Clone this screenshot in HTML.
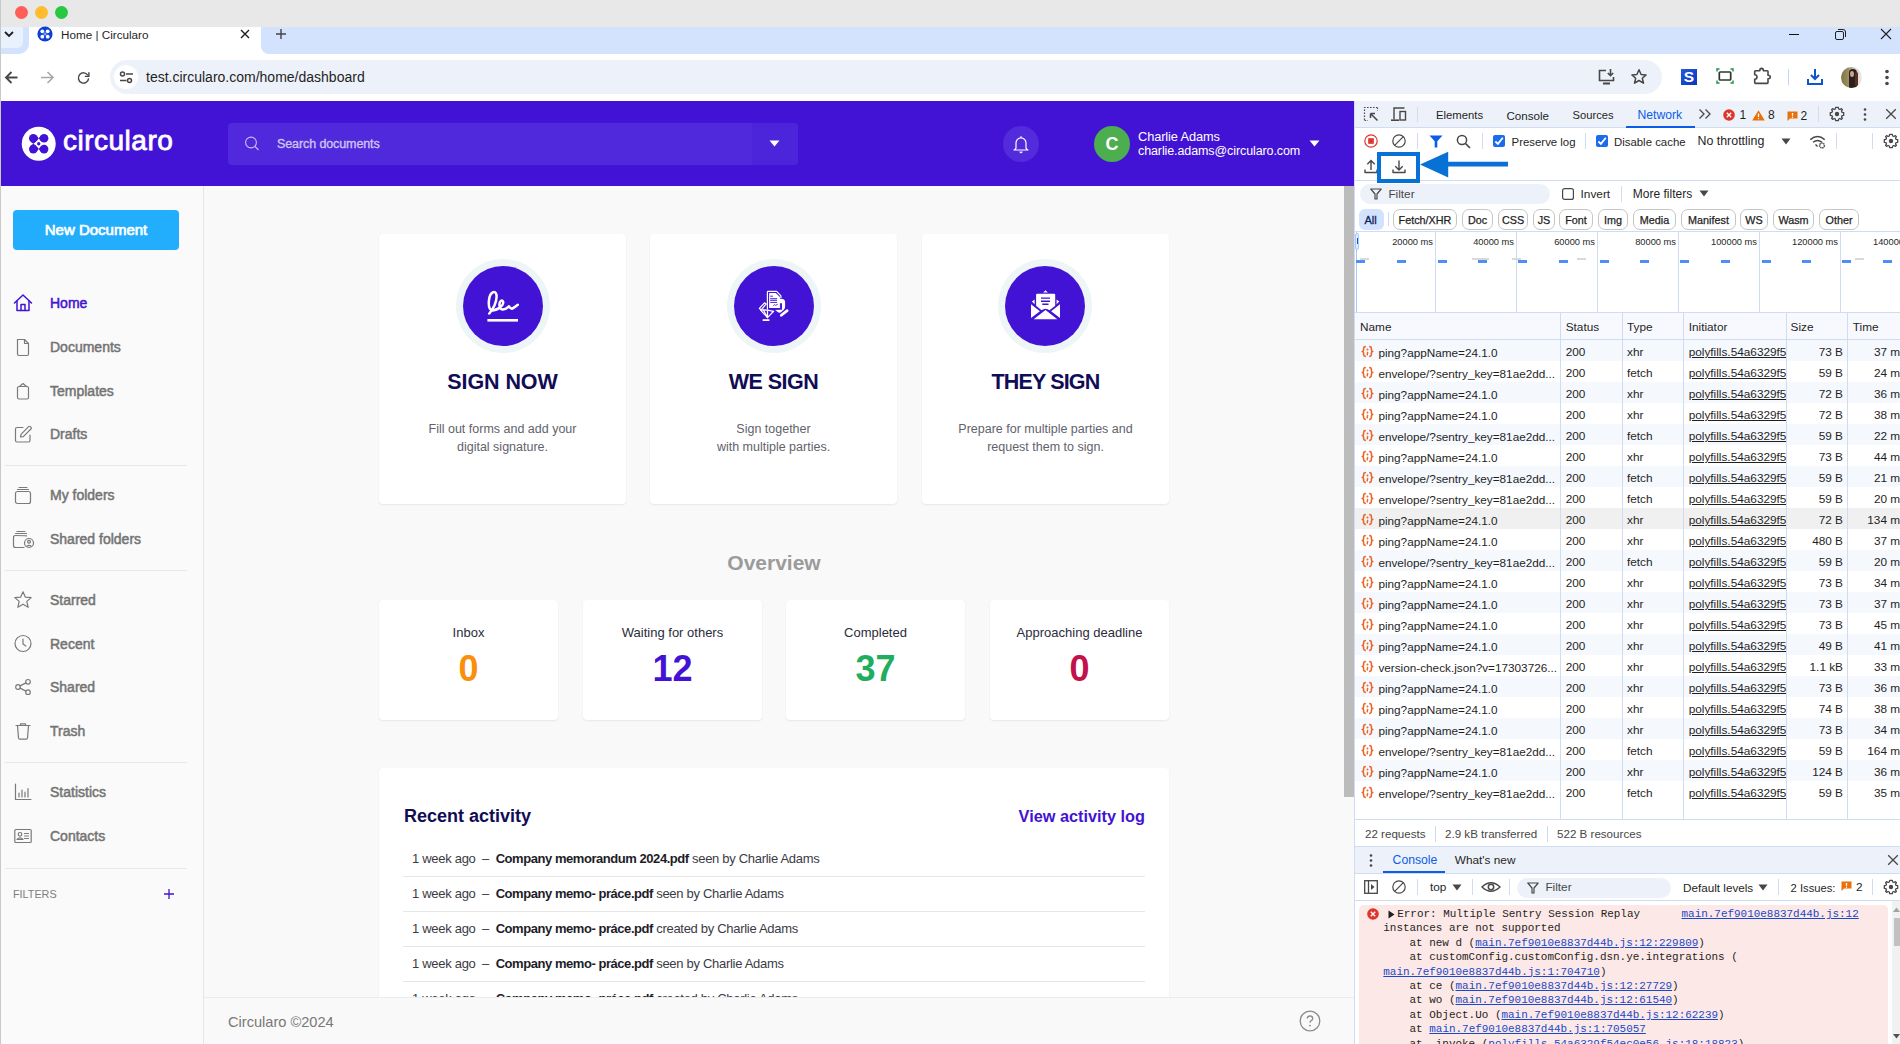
<!DOCTYPE html>
<html><head><meta charset="utf-8">
<style>
*{box-sizing:border-box;margin:0;padding:0}
html,body{width:1900px;height:1044px;overflow:hidden;background:#fff}
body{position:relative;font-family:"Liberation Sans",sans-serif;color:#000}
.a{position:absolute}
svg{display:block}
/* chrome */
#title{left:0;top:0;width:1900px;height:27px;background:#e8e8e8}
.tl{top:6px;width:13px;height:13px;border-radius:50%}
#tabs{left:0;top:27px;width:1900px;height:27px;background:#d3e3fd}
#tb{left:0;top:54px;width:1900px;height:47px;background:#fff}
#omni{left:110px;top:6px;width:1552px;height:34px;border-radius:17px;background:#edf2fa}
/* app */
#app{left:0;top:101px;width:1354px;height:943px;background:#f9f9f9;overflow:hidden}
#hdr{left:0;top:0;width:1354px;height:85px;background:#4213d4}
#side{left:0;top:85px;width:204px;height:858px;background:#fafafa;border-right:1px solid #e6e6e6}
#main{left:204px;top:85px;width:1140px;height:858px;background:#f9f9f9}
#sb{left:1344px;top:85px;width:10px;height:858px;background:transparent}
/* devtools */
#dt{left:1354px;top:101px;width:546px;height:943px;background:#fff;overflow:hidden;font-family:"Liberation Sans",sans-serif;font-size:12px;color:#1f1f1f}
#edge{left:0;top:0;width:1px;height:1044px;background:#c9c9c9;z-index:10}
</style></head><body>
<div id="title" class="a">
  <div class="a tl" style="left:15px;background:#fe5f57"></div>
  <div class="a tl" style="left:35px;background:#febc2e"></div>
  <div class="a tl" style="left:55px;background:#28c840"></div>
</div>
<div id="tabs" class="a" style="background:#fff">
  <div class="a" style="left:0;top:0;width:29px;height:27px;background:#d3e3fd;border-radius:0 0 10px 0"></div>
  <div class="a" style="left:1px;top:0;width:22px;height:21px;background:#e9f1fd;border-radius:0 0 6px 0"></div>
  <svg class="a" style="left:4px;top:4px" width="10" height="7" viewBox="0 0 10 7"><path d="M1 1 L5 5 L9 1" fill="none" stroke="#1f1f1f" stroke-width="1.8"/></svg>
  <div class="a" style="left:261px;top:0;width:1639px;height:27px;background:#d3e3fd;border-radius:0 0 0 8px"></div>
  <svg class="a" style="left:37px;top:-1px" width="16" height="16" viewBox="0 0 16 16"><circle cx="8" cy="8" r="7.6" fill="#0d3fd8"/><g fill="#fff"><circle cx="5.3" cy="5.3" r="1.9"/><circle cx="10.7" cy="5.3" r="1.9"/><circle cx="5.3" cy="10.7" r="1.9"/><circle cx="10.7" cy="10.7" r="1.9"/></g><circle cx="8" cy="8" r="1.1" fill="none" stroke="#fff" stroke-width=".6"/></svg>
  <div class="a" style="left:61px;top:1px;font-size:11.7px;line-height:14px;color:#1f1f1f;letter-spacing:0px">Home | Circularo</div>
  <svg class="a" style="left:239px;top:1px" width="12" height="12" viewBox="0 0 12 12"><path d="M2 2 L10 10 M10 2 L2 10" stroke="#1f1f1f" stroke-width="1.4"/></svg>
  <svg class="a" style="left:275px;top:1px" width="12" height="12" viewBox="0 0 12 12"><path d="M6 1 V11 M1 6 H11" stroke="#444" stroke-width="1.4"/></svg>
  <svg class="a" style="left:1787px;top:1px" width="14" height="12" viewBox="0 0 14 12"><path d="M2 6.5 H12" stroke="#111" stroke-width="1"/></svg>
  <svg class="a" style="left:1833px;top:0px" width="14" height="14" viewBox="0 0 14 14"><rect x="2.5" y="4.5" width="8" height="8" rx="1.5" fill="none" stroke="#1f1f1f" stroke-width="1"/><path d="M5 2.5 H10 Q12.5 2.5 12.5 5 V10" fill="none" stroke="#1f1f1f" stroke-width="1"/></svg>
  <svg class="a" style="left:1879px;top:0px" width="14" height="14" viewBox="0 0 14 14"><path d="M2 2 L12 12 M12 2 L2 12" stroke="#1f1f1f" stroke-width="1.1"/></svg>
</div>
<div id="tb" class="a">
  <svg class="a" style="left:3px;top:15px" width="17" height="17" viewBox="0 0 17 17"><path d="M14.5 8.5 H3 M8.5 3 L3 8.5 L8.5 14" fill="none" stroke="#474747" stroke-width="1.9"/></svg>
  <svg class="a" style="left:39px;top:15px" width="17" height="17" viewBox="0 0 17 17"><path d="M2 8.5 H14 M8.5 3 L14 8.5 L8.5 14" fill="none" stroke="#a8a8a8" stroke-width="1.6"/></svg>
  <svg class="a" style="left:76px;top:15.5px" width="15" height="15" viewBox="0 0 17 17"><path d="M13.6 6.2 A5.8 5.8 0 1 0 14.3 9.5" fill="none" stroke="#474747" stroke-width="1.6"/><path d="M14.6 2.6 V7.2 H10" fill="none" stroke="#474747" stroke-width="1.6"/></svg>
  <div id="omni" class="a">
    <div class="a" style="left:4px;top:5px;width:24px;height:24px;border-radius:12px;background:#fff"></div>
    <svg class="a" style="left:8px;top:9px" width="17" height="17" viewBox="0 0 17 17"><g fill="none" stroke="#474747" stroke-width="1.5"><circle cx="4.5" cy="5" r="2"/><path d="M8 5 H15"/><circle cx="11.5" cy="11.5" r="2"/><path d="M2 11.5 H8.5"/></g></svg>
    <div class="a" style="left:36px;top:9px;font-size:14px;line-height:17px;color:#1f1f1f">test.circularo.com/home/dashboard</div>
    <svg class="a" style="left:1487px;top:8px" width="19" height="18" viewBox="0 0 19 18"><g fill="none" stroke="#474747" stroke-width="1.6"><path d="M9 2.5 H2.5 V12.5 H16.5 V9"/><path d="M13.5 1 V7.5 M10.8 5 L13.5 7.7 L16.2 5"/></g><path d="M6 15.5 H13" stroke="#474747" stroke-width="2"/></svg>
    <svg class="a" style="left:1520px;top:8px" width="18" height="18" viewBox="0 0 18 18"><path d="M9 1.8 L11.1 6.5 L16.1 6.9 L12.3 10.2 L13.5 15.2 L9 12.5 L4.5 15.2 L5.7 10.2 L1.9 6.9 L6.9 6.5 Z" fill="none" stroke="#474747" stroke-width="1.5" stroke-linejoin="round"/></svg>
  </div>
  <div class="a" style="left:1681px;top:15px;width:16px;height:16px;background:linear-gradient(135deg,#2358e0,#0b36b8)"></div>
  <div class="a" style="left:1681px;top:12px;width:16px;height:22px;color:#fff;font-weight:bold;font-size:15.5px;line-height:22px;text-align:center">S</div>
  <svg class="a" style="left:1716px;top:14px" width="18" height="16" viewBox="0 0 18 16"><path d="M1 3.5 V1 H3.5 M14.5 1 H17 V3.5 M17 12.5 V15 H14.5 M3.5 15 H1 V12.5" fill="none" stroke="#1e8e3e" stroke-width="1.4"/><rect x="3.3" y="4" width="11.4" height="8" rx="0.8" fill="none" stroke="#333" stroke-width="1.7"/></svg>
  <svg class="a" style="left:1753px;top:13px" width="19" height="18" viewBox="0 0 19 18"><path d="M2.5 3.8 H6.8 Q6.8 1.4 8.6 1.4 Q10.4 1.4 10.4 3.8 H14.2 Q15 3.8 15 4.6 V8.3 Q17.3 8.3 17.3 10 Q17.3 11.7 15 11.7 V15.6 Q15 16.4 14.2 16.4 H2.5 Q1.7 16.4 1.7 15.6 V12.2 Q4 12.2 4 10 Q4 7.8 1.7 7.8 V4.6 Q1.7 3.8 2.5 3.8 Z" fill="none" stroke="#474747" stroke-width="1.6" stroke-linejoin="round"/></svg>
  <div class="a" style="left:1787.5px;top:15px;width:1.2px;height:16px;background:#c2d5f7"></div>
  <svg class="a" style="left:1806px;top:14px" width="18" height="18" viewBox="0 0 18 18"><g fill="none" stroke="#0b57d0" stroke-width="2"><path d="M9 1 V11 M5 7 L9 11 L13 7"/><path d="M2 11 V16 H16 V11"/></g></svg>
  <div class="a" style="left:1840.5px;top:12.5px;width:21px;height:21px;border-radius:50%;background:linear-gradient(90deg,#7d7446 0,#9c8f62 35%,#d9d4cc 70%,#ecebe8 100%);overflow:hidden"><div class="a" style="left:8px;top:2px;width:8px;height:19px;background:#2a1f1c;border-radius:4px 4px 0 0"></div><div class="a" style="left:9.5px;top:4px;width:4px;height:6px;background:#c9a58c;border-radius:50%"></div><div class="a" style="left:14px;top:5px;width:3px;height:14px;background:#5a2f24;border-radius:2px"></div></div>
  <svg class="a" style="left:1884px;top:15px" width="6" height="17" viewBox="0 0 6 17"><g fill="#474747"><circle cx="3" cy="2.5" r="1.8"/><circle cx="3" cy="8.5" r="1.8"/><circle cx="3" cy="14.5" r="1.8"/></g></svg>
</div>
<div id="app" class="a">
  <div id="hdr" class="a">
  <svg class="a" style="left:21px;top:25px" width="35" height="35" viewBox="0 0 35 35"><circle cx="17.7" cy="17.7" r="17" fill="#fff"/><g fill="#4213d4"><circle cx="12.30" cy="12.30" r="4.3"/><circle cx="23.10" cy="12.30" r="4.3"/><circle cx="12.30" cy="23.10" r="4.3"/><circle cx="23.10" cy="23.10" r="4.3"/><path d="M12.30 12.30 L15.72 14.90 L17.70 12.30 L15.72 9.70 Z"/><path d="M12.30 12.30 L9.70 15.72 L12.30 17.70 L14.90 15.72 Z"/><path d="M12.30 12.30 L17.70 12.30 L12.30 17.70 Z"/><path d="M23.10 12.30 L19.68 9.70 L17.70 12.30 L19.68 14.90 Z"/><path d="M12.30 23.10 L14.90 19.68 L12.30 17.70 L9.70 19.68 Z"/><path d="M12.30 23.10 L15.72 25.70 L17.70 23.10 L15.72 20.50 Z"/><path d="M12.30 23.10 L12.30 17.70 L17.70 23.10 Z"/><path d="M23.10 23.10 L19.68 20.50 L17.70 23.10 L19.68 25.70 Z"/><circle cx="17.7" cy="17.7" r="1.7"/></g></svg>
  <div class="a" style="left:63px;top:24px;font-size:28px;line-height:32px;color:#fff;-webkit-text-stroke:0.8px #fff;letter-spacing:0.5px">circularo</div>
  <div class="a" style="left:228px;top:22px;width:570px;height:42px;background:#5129dc;border-radius:4px;overflow:hidden">
    <div class="a" style="left:524px;top:0;width:46px;height:42px;background:#4c24da"></div>
    <svg class="a" style="left:16px;top:13px" width="17" height="17" viewBox="0 0 17 17"><circle cx="7" cy="6.5" r="5.4" fill="none" stroke="#c9bdf2" stroke-width="1.1"/><path d="M11 10.5 L14.5 14" stroke="#c9bdf2" stroke-width="1.1"/></svg>
    <div class="a" style="left:49px;top:13px;font-size:12.5px;line-height:16px;color:#cfc4f5;-webkit-text-stroke:0.35px #cfc4f5;letter-spacing:-0.1px">Search documents</div>
    <svg class="a" style="left:541px;top:17px" width="11" height="7" viewBox="0 0 11 7"><path d="M0.5 0.5 H10.5 L5.5 6.5 Z" fill="#fff"/></svg>
  </div>
  <div class="a" style="left:1003px;top:25px;width:36px;height:36px;border-radius:50%;background:#532bdc"></div>
  <svg class="a" style="left:1011px;top:33px" width="20" height="20" viewBox="0 0 20 20"><path d="M5 14 V9 A5 5.2 0 0 1 15 9 V14 Q15.5 15.5 17 16 H3 Q4.5 15.5 5 14 Z" fill="none" stroke="#fff" stroke-width="1.2" stroke-linejoin="round"/><path d="M10 2.3 V3.8 M8.6 17.6 L10 18.8 L11.4 17.6" fill="none" stroke="#fff" stroke-width="1.2"/></svg>
  <div class="a" style="left:1094px;top:25px;width:36px;height:36px;border-radius:50%;background:#4cae4f"></div>
  <div class="a" style="left:1094px;top:25px;width:36px;height:36px;line-height:36px;text-align:center;color:#fff;font-weight:bold;font-size:18px">C</div>
  <div class="a" style="left:1138px;top:28px;font-size:12.8px;line-height:15px;color:#fff;letter-spacing:-0.1px">Charlie Adams</div>
  <div class="a" style="left:1138px;top:43px;font-size:12.5px;line-height:15px;color:#fff;letter-spacing:-0.1px">charlie.adams@circularo.com</div>
  <svg class="a" style="left:1309px;top:39px" width="11" height="7" viewBox="0 0 11 7"><path d="M0.5 0.5 H10.5 L5.5 6.5 Z" fill="#fff"/></svg>
</div>
  <div id="side" class="a">
<div class="a" style="left:13px;top:24px;width:166px;height:40px;background:#23adfd;border-radius:4px;color:#fff;-webkit-text-stroke:0.7px #fff;font-size:15px;line-height:40px;text-align:center">New Document</div>
<div class="a" style="left:50px;top:108px;font-size:14px;line-height:18px;color:#4213d4;-webkit-text-stroke:0.5px #4213d4;white-space:nowrap">Home</div><svg class="a" style="left:13px;top:107px" width="20" height="20" viewBox="0 0 20 20" fill="none" stroke="#4213d4" stroke-width="1.5" stroke-linejoin="round" stroke-linecap="round"><path d="M1.5 10 L10 2 L18.5 10"/><path d="M4 8 V17.5 H16 V8"/><path d="M8 17.5 V11.5 H12 V17.5"/></svg>
<div class="a" style="left:50px;top:152px;font-size:14px;line-height:18px;color:#747474;-webkit-text-stroke:0.5px #747474;white-space:nowrap">Documents</div><svg class="a" style="left:15px;top:151px" width="16" height="20" viewBox="0 0 16 20" fill="none" stroke="#7a7a7a" stroke-width="1.2" stroke-linejoin="round" stroke-linecap="round"><path d="M2.5 2.5 H9.5 L13.5 6.5 V17 Q13.5 18.5 12 18.5 H4 Q2.5 18.5 2.5 17 Z"/><path d="M9.5 2.5 V6.5 H13.5"/></svg>
<div class="a" style="left:50px;top:196px;font-size:14px;line-height:18px;color:#747474;-webkit-text-stroke:0.5px #747474;white-space:nowrap">Templates</div><svg class="a" style="left:15px;top:195px" width="16" height="20" viewBox="0 0 16 20" fill="none" stroke="#7a7a7a" stroke-width="1.2" stroke-linejoin="round" stroke-linecap="round"><path d="M4 5.5 H12 Q13.5 5.5 13.5 7 V16.5 Q13.5 18 12 18 H4 Q2.5 18 2.5 16.5 V7 Q2.5 5.5 4 5.5 Z"/><path d="M4.5 5.5 L8 2.5 L11.5 5.5"/></svg>
<div class="a" style="left:50px;top:239px;font-size:14px;line-height:18px;color:#747474;-webkit-text-stroke:0.5px #747474;white-space:nowrap">Drafts</div><svg class="a" style="left:13px;top:238px" width="20" height="20" viewBox="0 0 20 20" fill="none" stroke="#7a7a7a" stroke-width="1.2" stroke-linejoin="round" stroke-linecap="round"><path d="M10 3.5 H4 Q2.5 3.5 2.5 5 V16.5 Q2.5 18 4 18 H15.5 Q17 18 17 16.5 V11"/><path d="M7.5 13 L8 10.3 L15.6 2.7 Q16.5 1.8 17.4 2.7 L17.9 3.2 Q18.8 4.1 17.9 5 L10.3 12.6 Z"/></svg>
<div class="a" style="left:5px;top:279px;width:182px;height:1px;background:#e8e8e8"></div>
<div class="a" style="left:50px;top:300px;font-size:14px;line-height:18px;color:#747474;-webkit-text-stroke:0.5px #747474;white-space:nowrap">My folders</div><svg class="a" style="left:13px;top:297px" width="20" height="22" viewBox="0 0 20 22" fill="none" stroke="#7a7a7a" stroke-width="1.2" stroke-linejoin="round" stroke-linecap="round"><path d="M6 4.5 H14"/><path d="M4.5 6.5 H15.5"/><rect x="2.5" y="8.5" width="15" height="12" rx="2"/></svg>
<div class="a" style="left:50px;top:344px;font-size:14px;line-height:18px;color:#747474;-webkit-text-stroke:0.5px #747474;white-space:nowrap">Shared folders</div><svg class="a" style="left:11px;top:341px" width="24" height="22" viewBox="0 0 24 22" fill="none" stroke="#7a7a7a" stroke-width="1.2" stroke-linejoin="round" stroke-linecap="round"><path d="M6 4.5 H14"/><path d="M4.5 6.5 H15.5"/><path d="M15.5 8.8 Q13.5 8.5 4.5 8.5 Q2.5 8.5 2.5 10.5 V18.5 Q2.5 20.5 4.5 20.5 H13"/><circle cx="18" cy="16" r="4.5"/><circle cx="18" cy="14.8" r="1.4"/><path d="M15.8 19.3 Q18 17.3 20.2 19.3"/></svg>
<div class="a" style="left:5px;top:384px;width:182px;height:1px;background:#e8e8e8"></div>
<div class="a" style="left:50px;top:405px;font-size:14px;line-height:18px;color:#747474;-webkit-text-stroke:0.5px #747474;white-space:nowrap">Starred</div><svg class="a" style="left:13px;top:404px" width="20" height="20" viewBox="0 0 20 20" fill="none" stroke="#7a7a7a" stroke-width="1.2" stroke-linejoin="round" stroke-linecap="round"><path d="M10 1.8 L12.4 7.2 L18.2 7.6 L13.8 11.4 L15.2 17.3 L10 14.2 L4.8 17.3 L6.2 11.4 L1.8 7.6 L7.6 7.2 Z"/></svg>
<div class="a" style="left:50px;top:449px;font-size:14px;line-height:18px;color:#747474;-webkit-text-stroke:0.5px #747474;white-space:nowrap">Recent</div><svg class="a" style="left:13px;top:448px" width="20" height="20" viewBox="0 0 20 20" fill="none" stroke="#7a7a7a" stroke-width="1.2" stroke-linejoin="round" stroke-linecap="round"><circle cx="10" cy="9.5" r="8"/><path d="M10 5 V10 L12.8 12"/></svg>
<div class="a" style="left:50px;top:492px;font-size:14px;line-height:18px;color:#747474;-webkit-text-stroke:0.5px #747474;white-space:nowrap">Shared</div><svg class="a" style="left:13px;top:491px" width="20" height="20" viewBox="0 0 20 20" fill="none" stroke="#7a7a7a" stroke-width="1.2" stroke-linejoin="round" stroke-linecap="round"><circle cx="5" cy="10" r="2.3"/><circle cx="15" cy="4.8" r="2.3"/><circle cx="15" cy="15.2" r="2.3"/><path d="M7.1 8.9 L12.9 5.9 M7.1 11.1 L12.9 14.1"/></svg>
<div class="a" style="left:50px;top:536px;font-size:14px;line-height:18px;color:#747474;-webkit-text-stroke:0.5px #747474;white-space:nowrap">Trash</div><svg class="a" style="left:13px;top:535px" width="20" height="20" viewBox="0 0 20 20" fill="none" stroke="#7a7a7a" stroke-width="1.2" stroke-linejoin="round" stroke-linecap="round"><path d="M3 4.5 H17"/><path d="M7.5 4.5 V2.8 H12.5 V4.5"/><path d="M4.5 4.5 L5.5 17 Q5.6 18.2 6.8 18.2 H13.2 Q14.4 18.2 14.5 17 L15.5 4.5"/></svg>
<div class="a" style="left:5px;top:576px;width:182px;height:1px;background:#e8e8e8"></div>
<div class="a" style="left:50px;top:597px;font-size:14px;line-height:18px;color:#747474;-webkit-text-stroke:0.5px #747474;white-space:nowrap">Statistics</div><svg class="a" style="left:13px;top:596px" width="20" height="20" viewBox="0 0 20 20" fill="none" stroke="#7a7a7a" stroke-width="1.2" stroke-linejoin="round" stroke-linecap="round"><path d="M2.5 2 V17.5 H18"/><path d="M6 15 V11 M9 15 V8 M12 15 V10 M15 15 V6.5"/></svg>
<div class="a" style="left:50px;top:641px;font-size:14px;line-height:18px;color:#747474;-webkit-text-stroke:0.5px #747474;white-space:nowrap">Contacts</div><svg class="a" style="left:13px;top:640px" width="20" height="20" viewBox="0 0 20 20" fill="none" stroke="#7a7a7a" stroke-width="1.2" stroke-linejoin="round" stroke-linecap="round"><rect x="1.8" y="3.5" width="16.4" height="13" rx="1"/><circle cx="7" cy="8.3" r="1.8"/><path d="M4 13.5 Q7 10.3 10 13.5 Z"/><path d="M11.5 7.5 H15.5 M11.5 10 H15.5 M11.5 12.5 H15.5"/></svg>
<div class="a" style="left:5px;top:682px;width:182px;height:1px;background:#e8e8e8"></div>
<div class="a" style="left:13px;top:701px;font-size:10.8px;line-height:14px;color:#7d7d7d">FILTERS</div>
<svg class="a" style="left:163px;top:702px" width="12" height="12" viewBox="0 0 12 12"><path d="M6 1 V11 M1 6 H11" stroke="#4213d4" stroke-width="1.3"/></svg>
</div>
<div id="main" class="a">
<div class="a" style="left:175px;top:48px;width:247px;height:270px;background:#fff;border-radius:4px;box-shadow:0 1px 2px rgba(0,0,0,0.07),0 0 1px rgba(0,0,0,0.04)"></div>
<div class="a" style="left:251.5px;top:73px;width:94px;height:94px;border-radius:50%;background:#eef5f7"></div>
<div class="a" style="left:258.5px;top:80px;width:80px;height:80px;border-radius:50%;background:#4213d4"></div>
<svg class="a" style="left:270px;top:92px" width="58" height="56" viewBox="0 0 58 56"><path d="M15.3 35.5 C19 31.5 23.5 23 22.4 16.5 C21.5 12 16 13.5 15 22 C14 30.5 16.5 33 20 32.3 C23 31.6 26.5 29.5 28.3 27 C30 24.5 29 21.5 27 22.8 C24.5 24.5 25 31 28.5 31.5 C31.5 31.8 33.5 29.5 35 28.3 C36 30 37 31 38.3 30.5 C40 29.8 42 28 43.8 26.7" fill="none" stroke="#fff" stroke-width="2.5" stroke-linecap="round" stroke-linejoin="round"/><rect x="13.4" y="41" width="30.6" height="2.6" fill="#fff"/></svg>
<div class="a" style="left:175px;top:183px;width:247px;text-align:center;font-size:21.5px;line-height:26px;font-weight:bold;color:#100c55;letter-spacing:-0.1px">SIGN NOW</div>
<div class="a" style="left:175px;top:234px;width:247px;text-align:center;font-size:12.5px;line-height:18px;color:#62626c">Fill out forms and add your<br>digital signature.</div>
<div class="a" style="left:446px;top:48px;width:247px;height:270px;background:#fff;border-radius:4px;box-shadow:0 1px 2px rgba(0,0,0,0.07),0 0 1px rgba(0,0,0,0.04)"></div>
<div class="a" style="left:522.5px;top:73px;width:94px;height:94px;border-radius:50%;background:#eef5f7"></div>
<div class="a" style="left:529.5px;top:80px;width:80px;height:80px;border-radius:50%;background:#4213d4"></div>
<svg class="a" style="left:541px;top:92px" width="58" height="56" viewBox="0 0 58 56"><path d="M22.4 31.4 V14 Q22.4 13.4 23 13.4 H31.7 L35.9 17.8 V20.6" fill="none" stroke="#fff" stroke-width="1.2" stroke-linejoin="round"/><path d="M24.1 15 H30.8 L34.9 19 V30 H24.1 Z" fill="#fff"/><g stroke="#4213d4" stroke-width="0.95"><path d="M25.2 18.2 H27.9 M25.2 20.7 H32.2 M25.2 22.3 H32.2 M25.2 24.4 H32.7"/></g><path d="M28.2 27.8 L29.6 26.6 L30.6 27.4 L32.7 26.3" fill="none" stroke="#4213d4" stroke-width="0.9"/><path d="M32.2 20.9 H37.4 Q40.1 21.3 40.1 24 V28.8 Q40.1 30.6 38.6 31.9 L35.6 34.4 Q34.3 35.2 33 34.3 L30.2 32 L35.1 31.7 V25.2 H32.2 Z" fill="#fff"/><path d="M35.1 25.2 H37 V31.7 H35.1 Z" fill="#4213d4"/><path d="M36.3 37.3 L42.2 32.6" stroke="#fff" stroke-width="2.7" stroke-linecap="round"/><g fill="none" stroke="#fff" stroke-width="1.25" stroke-linejoin="round"><path d="M14.4 30.4 L19.5 24.8 L21.2 25.9 L16.3 31.9 Z"/><path d="M15.8 32.4 L22.5 39.6 L28.6 33.3 L22.5 32.2 L18.3 31.8 Z"/><path d="M18.3 31.8 L22.5 39.6 L22.5 32.2"/></g><rect x="17.7" y="41.2" width="6.7" height="1.8" fill="#fff"/></svg>
<div class="a" style="left:446px;top:183px;width:247px;text-align:center;font-size:21.5px;line-height:26px;font-weight:bold;color:#100c55;letter-spacing:-0.55px">WE SIGN</div>
<div class="a" style="left:446px;top:234px;width:247px;text-align:center;font-size:12.5px;line-height:18px;color:#62626c">Sign together<br>with multiple parties.</div>
<div class="a" style="left:718px;top:48px;width:247px;height:270px;background:#fff;border-radius:4px;box-shadow:0 1px 2px rgba(0,0,0,0.07),0 0 1px rgba(0,0,0,0.04)"></div>
<div class="a" style="left:794px;top:73px;width:94px;height:94px;border-radius:50%;background:#eef5f7"></div>
<div class="a" style="left:801px;top:80px;width:80px;height:80px;border-radius:50%;background:#4213d4"></div>
<svg class="a" style="left:812px;top:92px" width="58" height="56" viewBox="0 0 58 56"><path d="M20.1 16.8 Q20.1 15.8 21.1 15.8 H38.2 Q39.2 15.8 39.2 16.8 V27.8 L33.5 32.3 Q29.5 29.3 25.5 32.3 L20.1 27.8 Z" fill="#fff"/><path d="M27.2 14.5 L29.5 12.3 L31.8 14.5 Z" fill="#fff"/><path d="M15.9 23.5 L18.6 21.5 V26.3 Z M43.2 23.5 L40.6 21.5 V26.3 Z" fill="#fff"/><path d="M15 26.2 L23.9 33.3 L15 40 Z M44 26.2 L35.1 33.3 L44 40 Z" fill="#fff"/><path d="M17.7 41.3 L29.5 31.9 L41.3 41.3 Z" fill="#fff"/><g stroke="#4213d4" stroke-width="1.4"><path d="M25 20.1 H34 M25 23.2 H34 M26.3 26.3 H32.5"/></g></svg>
<div class="a" style="left:718px;top:183px;width:247px;text-align:center;font-size:21.5px;line-height:26px;font-weight:bold;color:#100c55;letter-spacing:-0.85px">THEY SIGN</div>
<div class="a" style="left:718px;top:234px;width:247px;text-align:center;font-size:12.5px;line-height:18px;color:#62626c">Prepare for multiple parties and<br>request them to sign.</div>
<div class="a" style="left:175px;top:364px;width:790px;text-align:center;font-size:21px;line-height:26px;font-weight:bold;color:#9b9b9b">Overview</div>
<div class="a" style="left:175px;top:414px;width:179px;height:120px;background:#fff;border-radius:4px;box-shadow:0 1px 2px rgba(0,0,0,0.07),0 0 1px rgba(0,0,0,0.04)"></div>
<div class="a" style="left:175px;top:438.5px;width:179px;text-align:center;font-size:13px;line-height:16px;color:#2c2c3a">Inbox</div>
<div class="a" style="left:175px;top:463px;width:179px;text-align:center;font-size:36px;line-height:40px;font-weight:bold;color:#fa8f0c">0</div>
<div class="a" style="left:379px;top:414px;width:179px;height:120px;background:#fff;border-radius:4px;box-shadow:0 1px 2px rgba(0,0,0,0.07),0 0 1px rgba(0,0,0,0.04)"></div>
<div class="a" style="left:379px;top:438.5px;width:179px;text-align:center;font-size:13px;line-height:16px;color:#2c2c3a">Waiting for others</div>
<div class="a" style="left:379px;top:463px;width:179px;text-align:center;font-size:36px;line-height:40px;font-weight:bold;color:#4213d4">12</div>
<div class="a" style="left:582px;top:414px;width:179px;height:120px;background:#fff;border-radius:4px;box-shadow:0 1px 2px rgba(0,0,0,0.07),0 0 1px rgba(0,0,0,0.04)"></div>
<div class="a" style="left:582px;top:438.5px;width:179px;text-align:center;font-size:13px;line-height:16px;color:#2c2c3a">Completed</div>
<div class="a" style="left:582px;top:463px;width:179px;text-align:center;font-size:36px;line-height:40px;font-weight:bold;color:#1fad5e">37</div>
<div class="a" style="left:786px;top:414px;width:179px;height:120px;background:#fff;border-radius:4px;box-shadow:0 1px 2px rgba(0,0,0,0.07),0 0 1px rgba(0,0,0,0.04)"></div>
<div class="a" style="left:786px;top:438.5px;width:179px;text-align:center;font-size:13px;line-height:16px;color:#2c2c3a">Approaching deadline</div>
<div class="a" style="left:786px;top:463px;width:179px;text-align:center;font-size:36px;line-height:40px;font-weight:bold;color:#c4104b">0</div>
<div class="a" style="left:175px;top:582px;width:790px;height:300px;background:#fff;border-radius:4px;box-shadow:0 1px 2px rgba(0,0,0,0.07),0 0 1px rgba(0,0,0,0.04)"></div>
<div class="a" style="left:200px;top:619px;font-size:18px;line-height:22px;font-weight:bold;color:#100c55">Recent activity</div>
<div class="a" style="left:696px;top:619px;width:245px;text-align:right;font-size:16.3px;line-height:22px;font-weight:bold;color:#4213d4">View activity log</div>
<div class="a" style="left:208px;top:664px;white-space:nowrap;font-size:13px;line-height:18px;color:#3b3b45;letter-spacing:-0.3px">1 week ago&nbsp; –&nbsp; <b style="color:#1d1d28;letter-spacing:-0.45px">Company memorandum 2024.pdf</b> seen by Charlie Adams</div>
<div class="a" style="left:199px;top:690px;width:742px;height:1px;background:#e6e6e6"></div>
<div class="a" style="left:208px;top:699px;white-space:nowrap;font-size:13px;line-height:18px;color:#3b3b45;letter-spacing:-0.3px">1 week ago&nbsp; –&nbsp; <b style="color:#1d1d28;letter-spacing:-0.45px">Company memo- práce.pdf</b> seen by Charlie Adams</div>
<div class="a" style="left:199px;top:725px;width:742px;height:1px;background:#e6e6e6"></div>
<div class="a" style="left:208px;top:734px;white-space:nowrap;font-size:13px;line-height:18px;color:#3b3b45;letter-spacing:-0.3px">1 week ago&nbsp; –&nbsp; <b style="color:#1d1d28;letter-spacing:-0.45px">Company memo- práce.pdf</b> created by Charlie Adams</div>
<div class="a" style="left:199px;top:760px;width:742px;height:1px;background:#e6e6e6"></div>
<div class="a" style="left:208px;top:769px;white-space:nowrap;font-size:13px;line-height:18px;color:#3b3b45;letter-spacing:-0.3px">1 week ago&nbsp; –&nbsp; <b style="color:#1d1d28;letter-spacing:-0.45px">Company memo- práce.pdf</b> seen by Charlie Adams</div>
<div class="a" style="left:199px;top:795px;width:742px;height:1px;background:#e6e6e6"></div>
<div class="a" style="left:208px;top:804px;white-space:nowrap;font-size:13px;line-height:18px;color:#3b3b45;letter-spacing:-0.3px">1 week ago&nbsp; –&nbsp; <b style="color:#1d1d28;letter-spacing:-0.45px">Company memo- práce.pdf</b> created by Charlie Adams</div>
<div class="a" style="left:0px;top:811px;width:1150px;height:47px;background:#f9f9f9;border-top:1px solid #ececec"></div>
<div class="a" style="left:24px;top:827px;font-size:14.6px;line-height:18px;color:#787878">Circularo ©2024</div>
<svg class="a" style="left:1095px;top:824px" width="22" height="22" viewBox="0 0 22 22"><circle cx="11" cy="11" r="9.8" fill="none" stroke="#8a8a8a" stroke-width="1.3"/><path d="M8.3 8.6 Q8.3 6 11 6 Q13.7 6 13.7 8.5 Q13.7 10 11.9 10.9 Q11 11.4 11 12.8" fill="none" stroke="#8a8a8a" stroke-width="1.3"/><circle cx="11" cy="15.6" r="0.9" fill="#8a8a8a"/></svg>
</div>
<div id="sb" class="a"><div class="a" style="left:0;top:0;width:10px;height:611px;background:#bcbcbc"></div></div>
</div>
<div id="dt" class="a">
<div class="a" style="left:0.0px;top:0.0px;width:1px;height:943px;background:#d0dcf2"></div>
<div class="a" style="left:1.0px;top:0.0px;width:545px;height:26px;background:#edf2fa"></div>
<div class="a" style="left:1.0px;top:26.0px;width:545px;height:1px;background:#d0dcf2"></div>
<svg class="a" style="left:9.0px;top:5.0px" width="16" height="16" viewBox="0 0 16 16" ><g fill="none" stroke="#474747" stroke-width="1.2" stroke-dasharray="1.6 1.4"><path d="M1.5 14 V1.5 H14"/></g><path d="M1.5 14.5 H5 M14.5 1.5 V5" stroke="#474747" stroke-width="1.2" stroke-dasharray="1.6 1.4"/><path d="M7.5 7.5 L14.5 14.5 M7.5 7.5 H12 M7.5 7.5 V12" fill="none" stroke="#474747" stroke-width="1.5"/></svg>
<svg class="a" style="left:36.0px;top:5.0px" width="18" height="16" viewBox="0 0 18 16" ><path d="M4 13.5 V2 H14.5" fill="none" stroke="#474747" stroke-width="1.4"/><path d="M1 14.2 H9" stroke="#474747" stroke-width="1.6"/><rect x="10" y="5.5" width="5.5" height="8.5" fill="none" stroke="#474747" stroke-width="1.4"/></svg>
<div class="a" style="left:63.0px;top:6.0px;width:1px;height:15px;background:#d0dcf2"></div>
<div class="a" style="left:82.0px;top:7.1px;font-size:11.3px;line-height:14px;color:#1f1f1f;white-space:nowrap;">Elements</div>
<div class="a" style="left:152.5px;top:6.5px;font-size:11.6px;line-height:15px;color:#1f1f1f;white-space:nowrap;">Console</div>
<div class="a" style="left:218.6px;top:7.1px;font-size:11.2px;line-height:14px;color:#1f1f1f;white-space:nowrap;">Sources</div>
<div class="a" style="left:283.5px;top:7.3px;font-size:12.2px;line-height:15px;color:#0b5ce8;white-space:nowrap;">Network</div>
<div class="a" style="left:272.0px;top:25.0px;width:69px;height:2px;background:#0b5ce8"></div>
<svg class="a" style="left:344.0px;top:7.0px" width="14" height="12" viewBox="0 0 14 12" ><path d="M1.5 1.5 L6 6 L1.5 10.5 M7.5 1.5 L12 6 L7.5 10.5" fill="none" stroke="#474747" stroke-width="1.3"/></svg>
<svg class="a" style="left:369.0px;top:8.0px" width="12" height="12" viewBox="0 0 12 12" ><circle cx="6" cy="6" r="5.8" fill="#dc362e"/><path d="M3.8 3.8 L8.2 8.2 M8.2 3.8 L3.8 8.2" stroke="#fff" stroke-width="1.3"/></svg>
<div class="a" style="left:385.5px;top:7.3px;font-size:12px;line-height:15px;color:#1f1f1f;white-space:nowrap;">1</div>
<svg class="a" style="left:397.5px;top:9.0px" width="13" height="11" viewBox="0 0 13 11" ><path d="M6.5 0.3 L12.8 10.5 H0.2 Z" fill="#e8710a"/><path d="M6.5 3.5 V7" stroke="#fff" stroke-width="1.3"/><circle cx="6.5" cy="8.6" r="0.7" fill="#fff"/></svg>
<div class="a" style="left:414.0px;top:7.3px;font-size:12px;line-height:15px;color:#1f1f1f;white-space:nowrap;">8</div>
<svg class="a" style="left:432.5px;top:10.0px" width="11" height="11" viewBox="0 0 11 11" ><path d="M0.5 0.5 H10.5 V7.5 H3 L0.5 10 Z" fill="#e8710a"/><path d="M5.5 2 V4.8" stroke="#fff" stroke-width="1.3"/><circle cx="5.5" cy="6.2" r="0.7" fill="#fff"/></svg>
<div class="a" style="left:446.5px;top:8.3px;font-size:12px;line-height:15px;color:#1f1f1f;white-space:nowrap;">2</div>
<div class="a" style="left:464.0px;top:5.0px;width:1px;height:16px;background:#d0dcf2"></div>
<svg class="a" style="left:475.0px;top:5.0px" width="16" height="16" viewBox="0 0 16 16" ><path d="M8 1.3 L9.3 1.3 L9.7 3 L10.9 3.5 L12.4 2.6 L13.4 3.6 L12.5 5.1 L13 6.3 L14.7 6.7 L14.7 8 L14.7 9.3 L13 9.7 L12.5 10.9 L13.4 12.4 L12.4 13.4 L10.9 12.5 L9.7 13 L9.3 14.7 L6.7 14.7 L6.3 13 L5.1 12.5 L3.6 13.4 L2.6 12.4 L3.5 10.9 L3 9.7 L1.3 9.3 L1.3 6.7 L3 6.3 L3.5 5.1 L2.6 3.6 L3.6 2.6 L5.1 3.5 L6.3 3 L6.7 1.3 Z" fill="none" stroke="#474747" stroke-width="1.3" stroke-linejoin="round"/><circle cx="8" cy="8" r="2.2" fill="#474747"/></svg>
<svg class="a" style="left:508.0px;top:6.0px" width="6" height="15" viewBox="0 0 6 15" ><g fill="#474747"><circle cx="3" cy="2.5" r="1.3"/><circle cx="3" cy="7.5" r="1.3"/><circle cx="3" cy="12.5" r="1.3"/></g></svg>
<svg class="a" style="left:531.0px;top:7.0px" width="12" height="12" viewBox="0 0 12 12" ><path d="M1.2 1.2 L10.8 10.8 M10.8 1.2 L1.2 10.8" stroke="#474747" stroke-width="1.3"/></svg>
<svg class="a" style="left:10.0px;top:33.0px" width="14" height="14" viewBox="0 0 14 14" ><circle cx="7" cy="7" r="6.2" fill="none" stroke="#dc362e" stroke-width="1.2"/><rect x="4.2" y="4.2" width="5.6" height="5.6" fill="#dc362e"/></svg>
<svg class="a" style="left:38.0px;top:33.0px" width="14" height="14" viewBox="0 0 14 14" ><circle cx="7" cy="7" r="6.2" fill="none" stroke="#474747" stroke-width="1.2"/><path d="M2.7 11.3 L11.3 2.7" stroke="#474747" stroke-width="1.2"/></svg>
<div class="a" style="left:63.0px;top:32.0px;width:1px;height:16px;background:#d0dcf2"></div>
<svg class="a" style="left:75.0px;top:34.0px" width="14" height="13" viewBox="0 0 14 13" ><path d="M0.5 0.5 H13.5 L8.3 6.3 V12.5 H5.7 V6.3 Z" fill="#0b5ce8"/></svg>
<svg class="a" style="left:102.0px;top:33.0px" width="15" height="15" viewBox="0 0 15 15" ><circle cx="6" cy="6" r="4.6" fill="none" stroke="#474747" stroke-width="1.5"/><path d="M9.4 9.4 L14 14" stroke="#474747" stroke-width="1.6"/></svg>
<div class="a" style="left:128.0px;top:32.0px;width:1px;height:16px;background:#d0dcf2"></div>
<svg class="a" style="left:139.0px;top:34.0px" width="12" height="12" viewBox="0 0 12 12" ><rect x="0" y="0" width="12" height="12" rx="2" fill="#1b6bf0"/><path d="M2.4 6.5 L4.9 8.9 L9.8 2.8" fill="none" stroke="#fff" stroke-width="1.8"/></svg>
<div class="a" style="left:157.6px;top:34.0px;font-size:11.4px;line-height:14px;color:#1f1f1f;white-space:nowrap;">Preserve log</div>
<div class="a" style="left:231.0px;top:32.0px;width:1px;height:16px;background:#d0dcf2"></div>
<svg class="a" style="left:242.0px;top:34.0px" width="12" height="12" viewBox="0 0 12 12" ><rect x="0" y="0" width="12" height="12" rx="2" fill="#1b6bf0"/><path d="M2.4 6.5 L4.9 8.9 L9.8 2.8" fill="none" stroke="#fff" stroke-width="1.8"/></svg>
<div class="a" style="left:260.0px;top:34.0px;font-size:11.4px;line-height:14px;color:#1f1f1f;white-space:nowrap;">Disable cache</div>
<div class="a" style="left:343.5px;top:33.2px;font-size:12.4px;line-height:15px;color:#1f1f1f;white-space:nowrap;">No throttling</div>
<svg class="a" style="left:427.0px;top:37.0px" width="10" height="7" viewBox="0 0 10 7" ><path d="M0.5 0.5 H9.5 L5 6.5 Z" fill="#474747"/></svg>
<svg class="a" style="left:455.0px;top:33.0px" width="18" height="15" viewBox="0 0 18 15" ><path d="M1.3 5.6 Q8.5 -0.6 15.7 5.6" fill="none" stroke="#474747" stroke-width="1.4"/><path d="M4 8.3 Q8.5 4.8 13 8.3" fill="none" stroke="#474747" stroke-width="1.4"/><circle cx="13" cy="11.5" r="2.4" fill="none" stroke="#474747" stroke-width="1.5" stroke-dasharray="1.3 0.6"/><path d="M6.5 10.5 L8.5 12.5" stroke="#474747" stroke-width="1.4"/></svg>
<div class="a" style="left:482.0px;top:32.0px;width:1px;height:16px;background:#d0dcf2"></div>
<div class="a" style="left:518.0px;top:32.0px;width:1px;height:16px;background:#d0dcf2"></div>
<svg class="a" style="left:528.5px;top:32.0px" width="16" height="16" viewBox="0 0 16 16" ><path d="M8 1.3 L9.3 1.3 L9.7 3 L10.9 3.5 L12.4 2.6 L13.4 3.6 L12.5 5.1 L13 6.3 L14.7 6.7 L14.7 8 L14.7 9.3 L13 9.7 L12.5 10.9 L13.4 12.4 L12.4 13.4 L10.9 12.5 L9.7 13 L9.3 14.7 L6.7 14.7 L6.3 13 L5.1 12.5 L3.6 13.4 L2.6 12.4 L3.5 10.9 L3 9.7 L1.3 9.3 L1.3 6.7 L3 6.3 L3.5 5.1 L2.6 3.6 L3.6 2.6 L5.1 3.5 L6.3 3 L6.7 1.3 Z" fill="none" stroke="#474747" stroke-width="1.3" stroke-linejoin="round"/><circle cx="8" cy="8" r="2.2" fill="#474747"/></svg>
<svg class="a" style="left:10.0px;top:58.0px" width="14" height="15" viewBox="0 0 14 15" ><path d="M7 11 V1.8 M3.3 5.3 L7 1.6 L10.7 5.3" fill="none" stroke="#474747" stroke-width="1.4"/><path d="M1 10.5 V13.5 H13 V10.5" fill="none" stroke="#474747" stroke-width="1.4" stroke-linejoin="round"/></svg>
<svg class="a" style="left:38.0px;top:58.0px" width="14" height="15" viewBox="0 0 14 15" ><path d="M7 1.5 V10.7 M3.3 7.2 L7 10.9 L10.7 7.2" fill="none" stroke="#474747" stroke-width="1.4"/><path d="M1 10.5 V13.5 H13 V10.5" fill="none" stroke="#474747" stroke-width="1.4" stroke-linejoin="round"/></svg>
<div class="a" style="left:1.0px;top:79.0px;width:545px;height:1px;background:#d0dcf2"></div>
<div class="a" style="left:23.0px;top:51.0px;width:43px;height:31px;border:4.5px solid #0771d6"></div>
<svg class="a" style="left:65.0px;top:49.0px" width="90" height="29" viewBox="0 0 90 29" ><path d="M1 14.6 L29.2 1.8 V11.8 H89 V16.6 H29.2 V27.6 Z" fill="#0771d6"/></svg>
<div class="a" style="left:6.0px;top:83.0px;width:190px;height:20px;background:#edf2fa;border-radius:10px"></div>
<svg class="a" style="left:16.0px;top:87.0px" width="12" height="12" viewBox="0 0 12 12" ><path d="M0.8 1 H11.2 L7 6 V11 H5 V6 Z" fill="none" stroke="#474747" stroke-width="1.2" stroke-linejoin="round"/></svg>
<div class="a" style="left:34.4px;top:85.9px;font-size:11.8px;line-height:15px;color:#474747;white-space:nowrap;">Filter</div>
<svg class="a" style="left:208.0px;top:87.0px" width="12" height="12" viewBox="0 0 12 12" ><rect x="0.6" y="0.6" width="10.8" height="10.8" rx="2" fill="#fff" stroke="#474747" stroke-width="1.2"/></svg>
<div class="a" style="left:226.6px;top:85.9px;font-size:11.8px;line-height:15px;color:#1f1f1f;white-space:nowrap;">Invert</div>
<div class="a" style="left:267.0px;top:85.0px;width:1px;height:16px;background:#d0dcf2"></div>
<div class="a" style="left:278.8px;top:85.8px;font-size:12.0px;line-height:15px;color:#1f1f1f;white-space:nowrap;">More filters</div>
<svg class="a" style="left:345.0px;top:89.0px" width="10" height="7" viewBox="0 0 10 7" ><path d="M0.5 0.5 H9.5 L5 6.5 Z" fill="#474747"/></svg>
<div class="a" style="left:5.0px;top:108.0px;width:25px;height:21px;background:#d3e3fd;border-radius:6px"></div>
<div class="a" style="left:10.5px;top:112.2px;font-size:11px;line-height:14px;color:#0a1f5c;white-space:nowrap;-webkit-text-stroke:0.3px #0a1f5c">All</div>
<div class="a" style="left:34.0px;top:111.0px;width:1px;height:14px;background:#d0dcf2"></div>
<div class="a" style="left:39.0px;top:108.0px;width:64px;height:21px;border:1px solid #c4c7c5;border-radius:7px;font-size:10.8px;line-height:20px;text-align:center;color:#1f1f1f;white-space:nowrap;-webkit-text-stroke:0.25px #1f1f1f">Fetch/XHR</div>
<div class="a" style="left:108.0px;top:108.0px;width:31px;height:21px;border:1px solid #c4c7c5;border-radius:7px;font-size:10.8px;line-height:20px;text-align:center;color:#1f1f1f;white-space:nowrap;-webkit-text-stroke:0.25px #1f1f1f">Doc</div>
<div class="a" style="left:144.0px;top:108.0px;width:30px;height:21px;border:1px solid #c4c7c5;border-radius:7px;font-size:10.8px;line-height:20px;text-align:center;color:#1f1f1f;white-space:nowrap;-webkit-text-stroke:0.25px #1f1f1f">CSS</div>
<div class="a" style="left:179.0px;top:108.0px;width:22px;height:21px;border:1px solid #c4c7c5;border-radius:7px;font-size:10.8px;line-height:20px;text-align:center;color:#1f1f1f;white-space:nowrap;-webkit-text-stroke:0.25px #1f1f1f">JS</div>
<div class="a" style="left:205.0px;top:108.0px;width:34px;height:21px;border:1px solid #c4c7c5;border-radius:7px;font-size:10.8px;line-height:20px;text-align:center;color:#1f1f1f;white-space:nowrap;-webkit-text-stroke:0.25px #1f1f1f">Font</div>
<div class="a" style="left:244.0px;top:108.0px;width:30px;height:21px;border:1px solid #c4c7c5;border-radius:7px;font-size:10.8px;line-height:20px;text-align:center;color:#1f1f1f;white-space:nowrap;-webkit-text-stroke:0.25px #1f1f1f">Img</div>
<div class="a" style="left:279.0px;top:108.0px;width:43px;height:21px;border:1px solid #c4c7c5;border-radius:7px;font-size:10.8px;line-height:20px;text-align:center;color:#1f1f1f;white-space:nowrap;-webkit-text-stroke:0.25px #1f1f1f">Media</div>
<div class="a" style="left:327.0px;top:108.0px;width:55px;height:21px;border:1px solid #c4c7c5;border-radius:7px;font-size:10.8px;line-height:20px;text-align:center;color:#1f1f1f;white-space:nowrap;-webkit-text-stroke:0.25px #1f1f1f">Manifest</div>
<div class="a" style="left:386.0px;top:108.0px;width:28px;height:21px;border:1px solid #c4c7c5;border-radius:7px;font-size:10.8px;line-height:20px;text-align:center;color:#1f1f1f;white-space:nowrap;-webkit-text-stroke:0.25px #1f1f1f">WS</div>
<div class="a" style="left:419.0px;top:108.0px;width:41px;height:21px;border:1px solid #c4c7c5;border-radius:7px;font-size:10.8px;line-height:20px;text-align:center;color:#1f1f1f;white-space:nowrap;-webkit-text-stroke:0.25px #1f1f1f">Wasm</div>
<div class="a" style="left:465.0px;top:108.0px;width:40px;height:21px;border:1px solid #c4c7c5;border-radius:7px;font-size:10.8px;line-height:20px;text-align:center;color:#1f1f1f;white-space:nowrap;-webkit-text-stroke:0.25px #1f1f1f">Other</div>
<div class="a" style="left:1.0px;top:130.0px;width:545px;height:1px;background:#d0dcf2"></div>
<div class="a" style="left:2.0px;top:131.0px;width:1px;height:80px;background:#a8c7fa"></div>
<div class="a" style="left:1.0px;top:132.0px;width:4px;height:17px;background:#e3ecfb;border:1px solid #a8c7fa;border-radius:2px"></div>
<div class="a" style="left:2.5px;top:137.0px;width:1px;height:6px;background:#0b57d0"></div>
<div class="a" style="left:81.0px;top:131.0px;width:1px;height:80px;background:#d0dcf2"></div>
<div class="a" style="left:-9.0px;top:135.0px;width:88px;text-align:right;font-size:9.3px;line-height:12px;color:#1f1f1f;white-space:nowrap">20000 ms</div>
<div class="a" style="left:162.0px;top:131.0px;width:1px;height:80px;background:#d0dcf2"></div>
<div class="a" style="left:72.0px;top:135.0px;width:88px;text-align:right;font-size:9.3px;line-height:12px;color:#1f1f1f;white-space:nowrap">40000 ms</div>
<div class="a" style="left:243.0px;top:131.0px;width:1px;height:80px;background:#d0dcf2"></div>
<div class="a" style="left:153.0px;top:135.0px;width:88px;text-align:right;font-size:9.3px;line-height:12px;color:#1f1f1f;white-space:nowrap">60000 ms</div>
<div class="a" style="left:324.0px;top:131.0px;width:1px;height:80px;background:#d0dcf2"></div>
<div class="a" style="left:234.0px;top:135.0px;width:88px;text-align:right;font-size:9.3px;line-height:12px;color:#1f1f1f;white-space:nowrap">80000 ms</div>
<div class="a" style="left:405.0px;top:131.0px;width:1px;height:80px;background:#d0dcf2"></div>
<div class="a" style="left:315.0px;top:135.0px;width:88px;text-align:right;font-size:9.3px;line-height:12px;color:#1f1f1f;white-space:nowrap">100000 ms</div>
<div class="a" style="left:486.0px;top:131.0px;width:1px;height:80px;background:#d0dcf2"></div>
<div class="a" style="left:396.0px;top:135.0px;width:88px;text-align:right;font-size:9.3px;line-height:12px;color:#1f1f1f;white-space:nowrap">120000 ms</div>
<div class="a" style="left:567.0px;top:131.0px;width:1px;height:80px;background:#d0dcf2"></div>
<div class="a" style="left:477.0px;top:135.0px;width:88px;text-align:right;font-size:9.3px;line-height:12px;color:#1f1f1f;white-space:nowrap">140000 ms</div>
<div class="a" style="left:2.0px;top:159.0px;width:9px;height:2.5px;background:#4f8ef7"></div>
<div class="a" style="left:43.0px;top:159.0px;width:9px;height:2.5px;background:#4f8ef7"></div>
<div class="a" style="left:84.0px;top:159.0px;width:9px;height:2.5px;background:#4f8ef7"></div>
<div class="a" style="left:124.0px;top:159.0px;width:9px;height:2.5px;background:#4f8ef7"></div>
<div class="a" style="left:164.0px;top:159.0px;width:9px;height:2.5px;background:#4f8ef7"></div>
<div class="a" style="left:205.0px;top:159.0px;width:9px;height:2.5px;background:#4f8ef7"></div>
<div class="a" style="left:246.0px;top:159.0px;width:9px;height:2.5px;background:#4f8ef7"></div>
<div class="a" style="left:286.0px;top:159.0px;width:9px;height:2.5px;background:#4f8ef7"></div>
<div class="a" style="left:326.0px;top:159.0px;width:9px;height:2.5px;background:#4f8ef7"></div>
<div class="a" style="left:367.0px;top:159.0px;width:9px;height:2.5px;background:#4f8ef7"></div>
<div class="a" style="left:408.0px;top:159.0px;width:9px;height:2.5px;background:#4f8ef7"></div>
<div class="a" style="left:448.0px;top:159.0px;width:9px;height:2.5px;background:#4f8ef7"></div>
<div class="a" style="left:488.0px;top:159.0px;width:9px;height:2.5px;background:#4f8ef7"></div>
<div class="a" style="left:529.0px;top:159.0px;width:9px;height:2.5px;background:#4f8ef7"></div>
<div class="a" style="left:6.0px;top:157.0px;width:9px;height:1.5px;background:#d9d9d9"></div>
<div class="a" style="left:118.0px;top:157.0px;width:9px;height:1.5px;background:#d9d9d9"></div>
<div class="a" style="left:126.0px;top:157.0px;width:9px;height:1.5px;background:#d9d9d9"></div>
<div class="a" style="left:158.0px;top:157.0px;width:9px;height:1.5px;background:#d9d9d9"></div>
<div class="a" style="left:223.0px;top:157.0px;width:9px;height:1.5px;background:#d9d9d9"></div>
<div class="a" style="left:501.0px;top:157.0px;width:9px;height:1.5px;background:#d9d9d9"></div>
<div class="a" style="left:1.0px;top:211.0px;width:545px;height:1px;background:#d0dcf2"></div>
<div class="a" style="left:1.0px;top:212.0px;width:545px;height:26px;background:#f8f9fe"></div>
<div class="a" style="left:1.0px;top:238.0px;width:545px;height:1px;background:#d0dcf2"></div>
<div class="a" style="left:6.0px;top:219.2px;font-size:11.8px;line-height:15px;color:#1f1f1f;white-space:nowrap;">Name</div>
<div class="a" style="left:211.7px;top:219.2px;font-size:11.8px;line-height:15px;color:#1f1f1f;white-space:nowrap;">Status</div>
<div class="a" style="left:273.0px;top:219.2px;font-size:11.8px;line-height:15px;color:#1f1f1f;white-space:nowrap;">Type</div>
<div class="a" style="left:334.7px;top:219.2px;font-size:11.8px;line-height:15px;color:#1f1f1f;white-space:nowrap;">Initiator</div>
<div class="a" style="left:436.6px;top:219.2px;font-size:11.8px;line-height:15px;color:#1f1f1f;white-space:nowrap;">Size</div>
<div class="a" style="left:498.8px;top:219.2px;font-size:11.8px;line-height:15px;color:#1f1f1f;white-space:nowrap;">Time</div>
<div class="a" style="left:1.0px;top:239.0px;width:545px;height:21px;background:#f5f8fd"></div>
<svg class="a" style="left:6.5px;top:244.3px" width="13" height="13" viewBox="0 0 13 13" ><g fill="none" stroke="#e8682c" stroke-width="1.6" stroke-linecap="round" stroke-linejoin="round"><path d="M4.2 1.6 Q2.6 1.8 2.6 3.4 V5 Q2.6 6.3 1.2 6.5 Q2.6 6.7 2.6 8 V9.6 Q2.6 11.2 4.2 11.4"/><path d="M8.8 1.6 Q10.4 1.8 10.4 3.4 V5 Q10.4 6.3 11.8 6.5 Q10.4 6.7 10.4 8 V9.6 Q10.4 11.2 8.8 11.4"/></g><circle cx="6.5" cy="4.6" r="1" fill="#e8682c"/><path d="M6.6 7.6 L6.2 9.8" stroke="#e8682c" stroke-width="1.5" stroke-linecap="round"/></svg>
<div class="a" style="left:24.4px;top:243.7px;font-size:11.75px;line-height:15px;color:#1f1f1f;white-space:nowrap;">ping?appName=24.1.0</div>
<div class="a" style="left:211.7px;top:243.7px;font-size:11.8px;line-height:15px;color:#1f1f1f;white-space:nowrap;">200</div>
<div class="a" style="left:273.0px;top:243.7px;font-size:11.8px;line-height:15px;color:#1f1f1f;white-space:nowrap;">xhr</div>
<div class="a" style="left:334.7px;top:244.0px;width:97px;overflow:hidden;font-size:11.8px;line-height:14px;color:#1f1f1f;white-space:nowrap;text-decoration:underline">polyfills.54a6329f5</div>
<div class="a" style="left:391.0px;top:244.0px;width:98px;text-align:right;font-size:11.8px;line-height:14px;color:#1f1f1f;white-space:nowrap">73 B</div>
<div class="a" style="left:498.0px;top:244.0px;width:54px;text-align:right;font-size:11.8px;line-height:14px;color:#1f1f1f;white-space:nowrap">37 ms</div>
<div class="a" style="left:1.0px;top:260.0px;width:545px;height:21px;background:#fff"></div>
<svg class="a" style="left:6.5px;top:265.3px" width="13" height="13" viewBox="0 0 13 13" ><g fill="none" stroke="#e8682c" stroke-width="1.6" stroke-linecap="round" stroke-linejoin="round"><path d="M4.2 1.6 Q2.6 1.8 2.6 3.4 V5 Q2.6 6.3 1.2 6.5 Q2.6 6.7 2.6 8 V9.6 Q2.6 11.2 4.2 11.4"/><path d="M8.8 1.6 Q10.4 1.8 10.4 3.4 V5 Q10.4 6.3 11.8 6.5 Q10.4 6.7 10.4 8 V9.6 Q10.4 11.2 8.8 11.4"/></g><circle cx="6.5" cy="4.6" r="1" fill="#e8682c"/><path d="M6.6 7.6 L6.2 9.8" stroke="#e8682c" stroke-width="1.5" stroke-linecap="round"/></svg>
<div class="a" style="left:24.4px;top:264.7px;font-size:11.75px;line-height:15px;color:#1f1f1f;white-space:nowrap;">envelope/?sentry_key=81ae2dd...</div>
<div class="a" style="left:211.7px;top:264.7px;font-size:11.8px;line-height:15px;color:#1f1f1f;white-space:nowrap;">200</div>
<div class="a" style="left:273.0px;top:264.7px;font-size:11.8px;line-height:15px;color:#1f1f1f;white-space:nowrap;">fetch</div>
<div class="a" style="left:334.7px;top:265.0px;width:97px;overflow:hidden;font-size:11.8px;line-height:14px;color:#1f1f1f;white-space:nowrap;text-decoration:underline">polyfills.54a6329f5</div>
<div class="a" style="left:391.0px;top:265.0px;width:98px;text-align:right;font-size:11.8px;line-height:14px;color:#1f1f1f;white-space:nowrap">59 B</div>
<div class="a" style="left:498.0px;top:265.0px;width:54px;text-align:right;font-size:11.8px;line-height:14px;color:#1f1f1f;white-space:nowrap">24 ms</div>
<div class="a" style="left:1.0px;top:281.0px;width:545px;height:21px;background:#f5f8fd"></div>
<svg class="a" style="left:6.5px;top:286.3px" width="13" height="13" viewBox="0 0 13 13" ><g fill="none" stroke="#e8682c" stroke-width="1.6" stroke-linecap="round" stroke-linejoin="round"><path d="M4.2 1.6 Q2.6 1.8 2.6 3.4 V5 Q2.6 6.3 1.2 6.5 Q2.6 6.7 2.6 8 V9.6 Q2.6 11.2 4.2 11.4"/><path d="M8.8 1.6 Q10.4 1.8 10.4 3.4 V5 Q10.4 6.3 11.8 6.5 Q10.4 6.7 10.4 8 V9.6 Q10.4 11.2 8.8 11.4"/></g><circle cx="6.5" cy="4.6" r="1" fill="#e8682c"/><path d="M6.6 7.6 L6.2 9.8" stroke="#e8682c" stroke-width="1.5" stroke-linecap="round"/></svg>
<div class="a" style="left:24.4px;top:285.7px;font-size:11.75px;line-height:15px;color:#1f1f1f;white-space:nowrap;">ping?appName=24.1.0</div>
<div class="a" style="left:211.7px;top:285.7px;font-size:11.8px;line-height:15px;color:#1f1f1f;white-space:nowrap;">200</div>
<div class="a" style="left:273.0px;top:285.7px;font-size:11.8px;line-height:15px;color:#1f1f1f;white-space:nowrap;">xhr</div>
<div class="a" style="left:334.7px;top:286.0px;width:97px;overflow:hidden;font-size:11.8px;line-height:14px;color:#1f1f1f;white-space:nowrap;text-decoration:underline">polyfills.54a6329f5</div>
<div class="a" style="left:391.0px;top:286.0px;width:98px;text-align:right;font-size:11.8px;line-height:14px;color:#1f1f1f;white-space:nowrap">72 B</div>
<div class="a" style="left:498.0px;top:286.0px;width:54px;text-align:right;font-size:11.8px;line-height:14px;color:#1f1f1f;white-space:nowrap">36 ms</div>
<div class="a" style="left:1.0px;top:302.0px;width:545px;height:21px;background:#fff"></div>
<svg class="a" style="left:6.5px;top:307.3px" width="13" height="13" viewBox="0 0 13 13" ><g fill="none" stroke="#e8682c" stroke-width="1.6" stroke-linecap="round" stroke-linejoin="round"><path d="M4.2 1.6 Q2.6 1.8 2.6 3.4 V5 Q2.6 6.3 1.2 6.5 Q2.6 6.7 2.6 8 V9.6 Q2.6 11.2 4.2 11.4"/><path d="M8.8 1.6 Q10.4 1.8 10.4 3.4 V5 Q10.4 6.3 11.8 6.5 Q10.4 6.7 10.4 8 V9.6 Q10.4 11.2 8.8 11.4"/></g><circle cx="6.5" cy="4.6" r="1" fill="#e8682c"/><path d="M6.6 7.6 L6.2 9.8" stroke="#e8682c" stroke-width="1.5" stroke-linecap="round"/></svg>
<div class="a" style="left:24.4px;top:306.7px;font-size:11.75px;line-height:15px;color:#1f1f1f;white-space:nowrap;">ping?appName=24.1.0</div>
<div class="a" style="left:211.7px;top:306.7px;font-size:11.8px;line-height:15px;color:#1f1f1f;white-space:nowrap;">200</div>
<div class="a" style="left:273.0px;top:306.7px;font-size:11.8px;line-height:15px;color:#1f1f1f;white-space:nowrap;">xhr</div>
<div class="a" style="left:334.7px;top:307.0px;width:97px;overflow:hidden;font-size:11.8px;line-height:14px;color:#1f1f1f;white-space:nowrap;text-decoration:underline">polyfills.54a6329f5</div>
<div class="a" style="left:391.0px;top:307.0px;width:98px;text-align:right;font-size:11.8px;line-height:14px;color:#1f1f1f;white-space:nowrap">72 B</div>
<div class="a" style="left:498.0px;top:307.0px;width:54px;text-align:right;font-size:11.8px;line-height:14px;color:#1f1f1f;white-space:nowrap">38 ms</div>
<div class="a" style="left:1.0px;top:323.0px;width:545px;height:21px;background:#f5f8fd"></div>
<svg class="a" style="left:6.5px;top:328.3px" width="13" height="13" viewBox="0 0 13 13" ><g fill="none" stroke="#e8682c" stroke-width="1.6" stroke-linecap="round" stroke-linejoin="round"><path d="M4.2 1.6 Q2.6 1.8 2.6 3.4 V5 Q2.6 6.3 1.2 6.5 Q2.6 6.7 2.6 8 V9.6 Q2.6 11.2 4.2 11.4"/><path d="M8.8 1.6 Q10.4 1.8 10.4 3.4 V5 Q10.4 6.3 11.8 6.5 Q10.4 6.7 10.4 8 V9.6 Q10.4 11.2 8.8 11.4"/></g><circle cx="6.5" cy="4.6" r="1" fill="#e8682c"/><path d="M6.6 7.6 L6.2 9.8" stroke="#e8682c" stroke-width="1.5" stroke-linecap="round"/></svg>
<div class="a" style="left:24.4px;top:327.7px;font-size:11.75px;line-height:15px;color:#1f1f1f;white-space:nowrap;">envelope/?sentry_key=81ae2dd...</div>
<div class="a" style="left:211.7px;top:327.7px;font-size:11.8px;line-height:15px;color:#1f1f1f;white-space:nowrap;">200</div>
<div class="a" style="left:273.0px;top:327.7px;font-size:11.8px;line-height:15px;color:#1f1f1f;white-space:nowrap;">fetch</div>
<div class="a" style="left:334.7px;top:328.0px;width:97px;overflow:hidden;font-size:11.8px;line-height:14px;color:#1f1f1f;white-space:nowrap;text-decoration:underline">polyfills.54a6329f5</div>
<div class="a" style="left:391.0px;top:328.0px;width:98px;text-align:right;font-size:11.8px;line-height:14px;color:#1f1f1f;white-space:nowrap">59 B</div>
<div class="a" style="left:498.0px;top:328.0px;width:54px;text-align:right;font-size:11.8px;line-height:14px;color:#1f1f1f;white-space:nowrap">22 ms</div>
<div class="a" style="left:1.0px;top:344.0px;width:545px;height:21px;background:#fff"></div>
<svg class="a" style="left:6.5px;top:349.3px" width="13" height="13" viewBox="0 0 13 13" ><g fill="none" stroke="#e8682c" stroke-width="1.6" stroke-linecap="round" stroke-linejoin="round"><path d="M4.2 1.6 Q2.6 1.8 2.6 3.4 V5 Q2.6 6.3 1.2 6.5 Q2.6 6.7 2.6 8 V9.6 Q2.6 11.2 4.2 11.4"/><path d="M8.8 1.6 Q10.4 1.8 10.4 3.4 V5 Q10.4 6.3 11.8 6.5 Q10.4 6.7 10.4 8 V9.6 Q10.4 11.2 8.8 11.4"/></g><circle cx="6.5" cy="4.6" r="1" fill="#e8682c"/><path d="M6.6 7.6 L6.2 9.8" stroke="#e8682c" stroke-width="1.5" stroke-linecap="round"/></svg>
<div class="a" style="left:24.4px;top:348.7px;font-size:11.75px;line-height:15px;color:#1f1f1f;white-space:nowrap;">ping?appName=24.1.0</div>
<div class="a" style="left:211.7px;top:348.7px;font-size:11.8px;line-height:15px;color:#1f1f1f;white-space:nowrap;">200</div>
<div class="a" style="left:273.0px;top:348.7px;font-size:11.8px;line-height:15px;color:#1f1f1f;white-space:nowrap;">xhr</div>
<div class="a" style="left:334.7px;top:349.0px;width:97px;overflow:hidden;font-size:11.8px;line-height:14px;color:#1f1f1f;white-space:nowrap;text-decoration:underline">polyfills.54a6329f5</div>
<div class="a" style="left:391.0px;top:349.0px;width:98px;text-align:right;font-size:11.8px;line-height:14px;color:#1f1f1f;white-space:nowrap">73 B</div>
<div class="a" style="left:498.0px;top:349.0px;width:54px;text-align:right;font-size:11.8px;line-height:14px;color:#1f1f1f;white-space:nowrap">44 ms</div>
<div class="a" style="left:1.0px;top:365.0px;width:545px;height:21px;background:#f5f8fd"></div>
<svg class="a" style="left:6.5px;top:370.3px" width="13" height="13" viewBox="0 0 13 13" ><g fill="none" stroke="#e8682c" stroke-width="1.6" stroke-linecap="round" stroke-linejoin="round"><path d="M4.2 1.6 Q2.6 1.8 2.6 3.4 V5 Q2.6 6.3 1.2 6.5 Q2.6 6.7 2.6 8 V9.6 Q2.6 11.2 4.2 11.4"/><path d="M8.8 1.6 Q10.4 1.8 10.4 3.4 V5 Q10.4 6.3 11.8 6.5 Q10.4 6.7 10.4 8 V9.6 Q10.4 11.2 8.8 11.4"/></g><circle cx="6.5" cy="4.6" r="1" fill="#e8682c"/><path d="M6.6 7.6 L6.2 9.8" stroke="#e8682c" stroke-width="1.5" stroke-linecap="round"/></svg>
<div class="a" style="left:24.4px;top:369.7px;font-size:11.75px;line-height:15px;color:#1f1f1f;white-space:nowrap;">envelope/?sentry_key=81ae2dd...</div>
<div class="a" style="left:211.7px;top:369.7px;font-size:11.8px;line-height:15px;color:#1f1f1f;white-space:nowrap;">200</div>
<div class="a" style="left:273.0px;top:369.7px;font-size:11.8px;line-height:15px;color:#1f1f1f;white-space:nowrap;">fetch</div>
<div class="a" style="left:334.7px;top:370.0px;width:97px;overflow:hidden;font-size:11.8px;line-height:14px;color:#1f1f1f;white-space:nowrap;text-decoration:underline">polyfills.54a6329f5</div>
<div class="a" style="left:391.0px;top:370.0px;width:98px;text-align:right;font-size:11.8px;line-height:14px;color:#1f1f1f;white-space:nowrap">59 B</div>
<div class="a" style="left:498.0px;top:370.0px;width:54px;text-align:right;font-size:11.8px;line-height:14px;color:#1f1f1f;white-space:nowrap">21 ms</div>
<div class="a" style="left:1.0px;top:386.0px;width:545px;height:21px;background:#fff"></div>
<svg class="a" style="left:6.5px;top:391.3px" width="13" height="13" viewBox="0 0 13 13" ><g fill="none" stroke="#e8682c" stroke-width="1.6" stroke-linecap="round" stroke-linejoin="round"><path d="M4.2 1.6 Q2.6 1.8 2.6 3.4 V5 Q2.6 6.3 1.2 6.5 Q2.6 6.7 2.6 8 V9.6 Q2.6 11.2 4.2 11.4"/><path d="M8.8 1.6 Q10.4 1.8 10.4 3.4 V5 Q10.4 6.3 11.8 6.5 Q10.4 6.7 10.4 8 V9.6 Q10.4 11.2 8.8 11.4"/></g><circle cx="6.5" cy="4.6" r="1" fill="#e8682c"/><path d="M6.6 7.6 L6.2 9.8" stroke="#e8682c" stroke-width="1.5" stroke-linecap="round"/></svg>
<div class="a" style="left:24.4px;top:390.7px;font-size:11.75px;line-height:15px;color:#1f1f1f;white-space:nowrap;">envelope/?sentry_key=81ae2dd...</div>
<div class="a" style="left:211.7px;top:390.7px;font-size:11.8px;line-height:15px;color:#1f1f1f;white-space:nowrap;">200</div>
<div class="a" style="left:273.0px;top:390.7px;font-size:11.8px;line-height:15px;color:#1f1f1f;white-space:nowrap;">fetch</div>
<div class="a" style="left:334.7px;top:391.0px;width:97px;overflow:hidden;font-size:11.8px;line-height:14px;color:#1f1f1f;white-space:nowrap;text-decoration:underline">polyfills.54a6329f5</div>
<div class="a" style="left:391.0px;top:391.0px;width:98px;text-align:right;font-size:11.8px;line-height:14px;color:#1f1f1f;white-space:nowrap">59 B</div>
<div class="a" style="left:498.0px;top:391.0px;width:54px;text-align:right;font-size:11.8px;line-height:14px;color:#1f1f1f;white-space:nowrap">20 ms</div>
<div class="a" style="left:1.0px;top:407.0px;width:545px;height:21px;background:#f0f0f0"></div>
<svg class="a" style="left:6.5px;top:412.3px" width="13" height="13" viewBox="0 0 13 13" ><g fill="none" stroke="#e8682c" stroke-width="1.6" stroke-linecap="round" stroke-linejoin="round"><path d="M4.2 1.6 Q2.6 1.8 2.6 3.4 V5 Q2.6 6.3 1.2 6.5 Q2.6 6.7 2.6 8 V9.6 Q2.6 11.2 4.2 11.4"/><path d="M8.8 1.6 Q10.4 1.8 10.4 3.4 V5 Q10.4 6.3 11.8 6.5 Q10.4 6.7 10.4 8 V9.6 Q10.4 11.2 8.8 11.4"/></g><circle cx="6.5" cy="4.6" r="1" fill="#e8682c"/><path d="M6.6 7.6 L6.2 9.8" stroke="#e8682c" stroke-width="1.5" stroke-linecap="round"/></svg>
<div class="a" style="left:24.4px;top:411.7px;font-size:11.75px;line-height:15px;color:#1f1f1f;white-space:nowrap;">ping?appName=24.1.0</div>
<div class="a" style="left:211.7px;top:411.7px;font-size:11.8px;line-height:15px;color:#1f1f1f;white-space:nowrap;">200</div>
<div class="a" style="left:273.0px;top:411.7px;font-size:11.8px;line-height:15px;color:#1f1f1f;white-space:nowrap;">xhr</div>
<div class="a" style="left:334.7px;top:412.0px;width:97px;overflow:hidden;font-size:11.8px;line-height:14px;color:#1f1f1f;white-space:nowrap;text-decoration:underline">polyfills.54a6329f5</div>
<div class="a" style="left:391.0px;top:412.0px;width:98px;text-align:right;font-size:11.8px;line-height:14px;color:#1f1f1f;white-space:nowrap">72 B</div>
<div class="a" style="left:498.0px;top:412.0px;width:54px;text-align:right;font-size:11.8px;line-height:14px;color:#1f1f1f;white-space:nowrap">134 ms</div>
<div class="a" style="left:1.0px;top:428.0px;width:545px;height:21px;background:#fff"></div>
<svg class="a" style="left:6.5px;top:433.3px" width="13" height="13" viewBox="0 0 13 13" ><g fill="none" stroke="#e8682c" stroke-width="1.6" stroke-linecap="round" stroke-linejoin="round"><path d="M4.2 1.6 Q2.6 1.8 2.6 3.4 V5 Q2.6 6.3 1.2 6.5 Q2.6 6.7 2.6 8 V9.6 Q2.6 11.2 4.2 11.4"/><path d="M8.8 1.6 Q10.4 1.8 10.4 3.4 V5 Q10.4 6.3 11.8 6.5 Q10.4 6.7 10.4 8 V9.6 Q10.4 11.2 8.8 11.4"/></g><circle cx="6.5" cy="4.6" r="1" fill="#e8682c"/><path d="M6.6 7.6 L6.2 9.8" stroke="#e8682c" stroke-width="1.5" stroke-linecap="round"/></svg>
<div class="a" style="left:24.4px;top:432.7px;font-size:11.75px;line-height:15px;color:#1f1f1f;white-space:nowrap;">ping?appName=24.1.0</div>
<div class="a" style="left:211.7px;top:432.7px;font-size:11.8px;line-height:15px;color:#1f1f1f;white-space:nowrap;">200</div>
<div class="a" style="left:273.0px;top:432.7px;font-size:11.8px;line-height:15px;color:#1f1f1f;white-space:nowrap;">xhr</div>
<div class="a" style="left:334.7px;top:433.0px;width:97px;overflow:hidden;font-size:11.8px;line-height:14px;color:#1f1f1f;white-space:nowrap;text-decoration:underline">polyfills.54a6329f5</div>
<div class="a" style="left:391.0px;top:433.0px;width:98px;text-align:right;font-size:11.8px;line-height:14px;color:#1f1f1f;white-space:nowrap">480 B</div>
<div class="a" style="left:498.0px;top:433.0px;width:54px;text-align:right;font-size:11.8px;line-height:14px;color:#1f1f1f;white-space:nowrap">37 ms</div>
<div class="a" style="left:1.0px;top:449.0px;width:545px;height:21px;background:#f5f8fd"></div>
<svg class="a" style="left:6.5px;top:454.3px" width="13" height="13" viewBox="0 0 13 13" ><g fill="none" stroke="#e8682c" stroke-width="1.6" stroke-linecap="round" stroke-linejoin="round"><path d="M4.2 1.6 Q2.6 1.8 2.6 3.4 V5 Q2.6 6.3 1.2 6.5 Q2.6 6.7 2.6 8 V9.6 Q2.6 11.2 4.2 11.4"/><path d="M8.8 1.6 Q10.4 1.8 10.4 3.4 V5 Q10.4 6.3 11.8 6.5 Q10.4 6.7 10.4 8 V9.6 Q10.4 11.2 8.8 11.4"/></g><circle cx="6.5" cy="4.6" r="1" fill="#e8682c"/><path d="M6.6 7.6 L6.2 9.8" stroke="#e8682c" stroke-width="1.5" stroke-linecap="round"/></svg>
<div class="a" style="left:24.4px;top:453.7px;font-size:11.75px;line-height:15px;color:#1f1f1f;white-space:nowrap;">envelope/?sentry_key=81ae2dd...</div>
<div class="a" style="left:211.7px;top:453.7px;font-size:11.8px;line-height:15px;color:#1f1f1f;white-space:nowrap;">200</div>
<div class="a" style="left:273.0px;top:453.7px;font-size:11.8px;line-height:15px;color:#1f1f1f;white-space:nowrap;">fetch</div>
<div class="a" style="left:334.7px;top:454.0px;width:97px;overflow:hidden;font-size:11.8px;line-height:14px;color:#1f1f1f;white-space:nowrap;text-decoration:underline">polyfills.54a6329f5</div>
<div class="a" style="left:391.0px;top:454.0px;width:98px;text-align:right;font-size:11.8px;line-height:14px;color:#1f1f1f;white-space:nowrap">59 B</div>
<div class="a" style="left:498.0px;top:454.0px;width:54px;text-align:right;font-size:11.8px;line-height:14px;color:#1f1f1f;white-space:nowrap">20 ms</div>
<div class="a" style="left:1.0px;top:470.0px;width:545px;height:21px;background:#fff"></div>
<svg class="a" style="left:6.5px;top:475.3px" width="13" height="13" viewBox="0 0 13 13" ><g fill="none" stroke="#e8682c" stroke-width="1.6" stroke-linecap="round" stroke-linejoin="round"><path d="M4.2 1.6 Q2.6 1.8 2.6 3.4 V5 Q2.6 6.3 1.2 6.5 Q2.6 6.7 2.6 8 V9.6 Q2.6 11.2 4.2 11.4"/><path d="M8.8 1.6 Q10.4 1.8 10.4 3.4 V5 Q10.4 6.3 11.8 6.5 Q10.4 6.7 10.4 8 V9.6 Q10.4 11.2 8.8 11.4"/></g><circle cx="6.5" cy="4.6" r="1" fill="#e8682c"/><path d="M6.6 7.6 L6.2 9.8" stroke="#e8682c" stroke-width="1.5" stroke-linecap="round"/></svg>
<div class="a" style="left:24.4px;top:474.7px;font-size:11.75px;line-height:15px;color:#1f1f1f;white-space:nowrap;">ping?appName=24.1.0</div>
<div class="a" style="left:211.7px;top:474.7px;font-size:11.8px;line-height:15px;color:#1f1f1f;white-space:nowrap;">200</div>
<div class="a" style="left:273.0px;top:474.7px;font-size:11.8px;line-height:15px;color:#1f1f1f;white-space:nowrap;">xhr</div>
<div class="a" style="left:334.7px;top:475.0px;width:97px;overflow:hidden;font-size:11.8px;line-height:14px;color:#1f1f1f;white-space:nowrap;text-decoration:underline">polyfills.54a6329f5</div>
<div class="a" style="left:391.0px;top:475.0px;width:98px;text-align:right;font-size:11.8px;line-height:14px;color:#1f1f1f;white-space:nowrap">73 B</div>
<div class="a" style="left:498.0px;top:475.0px;width:54px;text-align:right;font-size:11.8px;line-height:14px;color:#1f1f1f;white-space:nowrap">34 ms</div>
<div class="a" style="left:1.0px;top:491.0px;width:545px;height:21px;background:#f5f8fd"></div>
<svg class="a" style="left:6.5px;top:496.3px" width="13" height="13" viewBox="0 0 13 13" ><g fill="none" stroke="#e8682c" stroke-width="1.6" stroke-linecap="round" stroke-linejoin="round"><path d="M4.2 1.6 Q2.6 1.8 2.6 3.4 V5 Q2.6 6.3 1.2 6.5 Q2.6 6.7 2.6 8 V9.6 Q2.6 11.2 4.2 11.4"/><path d="M8.8 1.6 Q10.4 1.8 10.4 3.4 V5 Q10.4 6.3 11.8 6.5 Q10.4 6.7 10.4 8 V9.6 Q10.4 11.2 8.8 11.4"/></g><circle cx="6.5" cy="4.6" r="1" fill="#e8682c"/><path d="M6.6 7.6 L6.2 9.8" stroke="#e8682c" stroke-width="1.5" stroke-linecap="round"/></svg>
<div class="a" style="left:24.4px;top:495.7px;font-size:11.75px;line-height:15px;color:#1f1f1f;white-space:nowrap;">ping?appName=24.1.0</div>
<div class="a" style="left:211.7px;top:495.7px;font-size:11.8px;line-height:15px;color:#1f1f1f;white-space:nowrap;">200</div>
<div class="a" style="left:273.0px;top:495.7px;font-size:11.8px;line-height:15px;color:#1f1f1f;white-space:nowrap;">xhr</div>
<div class="a" style="left:334.7px;top:496.0px;width:97px;overflow:hidden;font-size:11.8px;line-height:14px;color:#1f1f1f;white-space:nowrap;text-decoration:underline">polyfills.54a6329f5</div>
<div class="a" style="left:391.0px;top:496.0px;width:98px;text-align:right;font-size:11.8px;line-height:14px;color:#1f1f1f;white-space:nowrap">73 B</div>
<div class="a" style="left:498.0px;top:496.0px;width:54px;text-align:right;font-size:11.8px;line-height:14px;color:#1f1f1f;white-space:nowrap">37 ms</div>
<div class="a" style="left:1.0px;top:512.0px;width:545px;height:21px;background:#fff"></div>
<svg class="a" style="left:6.5px;top:517.3px" width="13" height="13" viewBox="0 0 13 13" ><g fill="none" stroke="#e8682c" stroke-width="1.6" stroke-linecap="round" stroke-linejoin="round"><path d="M4.2 1.6 Q2.6 1.8 2.6 3.4 V5 Q2.6 6.3 1.2 6.5 Q2.6 6.7 2.6 8 V9.6 Q2.6 11.2 4.2 11.4"/><path d="M8.8 1.6 Q10.4 1.8 10.4 3.4 V5 Q10.4 6.3 11.8 6.5 Q10.4 6.7 10.4 8 V9.6 Q10.4 11.2 8.8 11.4"/></g><circle cx="6.5" cy="4.6" r="1" fill="#e8682c"/><path d="M6.6 7.6 L6.2 9.8" stroke="#e8682c" stroke-width="1.5" stroke-linecap="round"/></svg>
<div class="a" style="left:24.4px;top:516.7px;font-size:11.75px;line-height:15px;color:#1f1f1f;white-space:nowrap;">ping?appName=24.1.0</div>
<div class="a" style="left:211.7px;top:516.7px;font-size:11.8px;line-height:15px;color:#1f1f1f;white-space:nowrap;">200</div>
<div class="a" style="left:273.0px;top:516.7px;font-size:11.8px;line-height:15px;color:#1f1f1f;white-space:nowrap;">xhr</div>
<div class="a" style="left:334.7px;top:517.0px;width:97px;overflow:hidden;font-size:11.8px;line-height:14px;color:#1f1f1f;white-space:nowrap;text-decoration:underline">polyfills.54a6329f5</div>
<div class="a" style="left:391.0px;top:517.0px;width:98px;text-align:right;font-size:11.8px;line-height:14px;color:#1f1f1f;white-space:nowrap">73 B</div>
<div class="a" style="left:498.0px;top:517.0px;width:54px;text-align:right;font-size:11.8px;line-height:14px;color:#1f1f1f;white-space:nowrap">45 ms</div>
<div class="a" style="left:1.0px;top:533.0px;width:545px;height:21px;background:#f5f8fd"></div>
<svg class="a" style="left:6.5px;top:538.3px" width="13" height="13" viewBox="0 0 13 13" ><g fill="none" stroke="#e8682c" stroke-width="1.6" stroke-linecap="round" stroke-linejoin="round"><path d="M4.2 1.6 Q2.6 1.8 2.6 3.4 V5 Q2.6 6.3 1.2 6.5 Q2.6 6.7 2.6 8 V9.6 Q2.6 11.2 4.2 11.4"/><path d="M8.8 1.6 Q10.4 1.8 10.4 3.4 V5 Q10.4 6.3 11.8 6.5 Q10.4 6.7 10.4 8 V9.6 Q10.4 11.2 8.8 11.4"/></g><circle cx="6.5" cy="4.6" r="1" fill="#e8682c"/><path d="M6.6 7.6 L6.2 9.8" stroke="#e8682c" stroke-width="1.5" stroke-linecap="round"/></svg>
<div class="a" style="left:24.4px;top:537.7px;font-size:11.75px;line-height:15px;color:#1f1f1f;white-space:nowrap;">ping?appName=24.1.0</div>
<div class="a" style="left:211.7px;top:537.7px;font-size:11.8px;line-height:15px;color:#1f1f1f;white-space:nowrap;">200</div>
<div class="a" style="left:273.0px;top:537.7px;font-size:11.8px;line-height:15px;color:#1f1f1f;white-space:nowrap;">xhr</div>
<div class="a" style="left:334.7px;top:538.0px;width:97px;overflow:hidden;font-size:11.8px;line-height:14px;color:#1f1f1f;white-space:nowrap;text-decoration:underline">polyfills.54a6329f5</div>
<div class="a" style="left:391.0px;top:538.0px;width:98px;text-align:right;font-size:11.8px;line-height:14px;color:#1f1f1f;white-space:nowrap">49 B</div>
<div class="a" style="left:498.0px;top:538.0px;width:54px;text-align:right;font-size:11.8px;line-height:14px;color:#1f1f1f;white-space:nowrap">41 ms</div>
<div class="a" style="left:1.0px;top:554.0px;width:545px;height:21px;background:#fff"></div>
<svg class="a" style="left:6.5px;top:559.3px" width="13" height="13" viewBox="0 0 13 13" ><g fill="none" stroke="#e8682c" stroke-width="1.6" stroke-linecap="round" stroke-linejoin="round"><path d="M4.2 1.6 Q2.6 1.8 2.6 3.4 V5 Q2.6 6.3 1.2 6.5 Q2.6 6.7 2.6 8 V9.6 Q2.6 11.2 4.2 11.4"/><path d="M8.8 1.6 Q10.4 1.8 10.4 3.4 V5 Q10.4 6.3 11.8 6.5 Q10.4 6.7 10.4 8 V9.6 Q10.4 11.2 8.8 11.4"/></g><circle cx="6.5" cy="4.6" r="1" fill="#e8682c"/><path d="M6.6 7.6 L6.2 9.8" stroke="#e8682c" stroke-width="1.5" stroke-linecap="round"/></svg>
<div class="a" style="left:24.4px;top:558.7px;font-size:11.75px;line-height:15px;color:#1f1f1f;white-space:nowrap;">version-check.json?v=17303726...</div>
<div class="a" style="left:211.7px;top:558.7px;font-size:11.8px;line-height:15px;color:#1f1f1f;white-space:nowrap;">200</div>
<div class="a" style="left:273.0px;top:558.7px;font-size:11.8px;line-height:15px;color:#1f1f1f;white-space:nowrap;">xhr</div>
<div class="a" style="left:334.7px;top:559.0px;width:97px;overflow:hidden;font-size:11.8px;line-height:14px;color:#1f1f1f;white-space:nowrap;text-decoration:underline">polyfills.54a6329f5</div>
<div class="a" style="left:391.0px;top:559.0px;width:98px;text-align:right;font-size:11.8px;line-height:14px;color:#1f1f1f;white-space:nowrap">1.1 kB</div>
<div class="a" style="left:498.0px;top:559.0px;width:54px;text-align:right;font-size:11.8px;line-height:14px;color:#1f1f1f;white-space:nowrap">33 ms</div>
<div class="a" style="left:1.0px;top:575.0px;width:545px;height:21px;background:#f5f8fd"></div>
<svg class="a" style="left:6.5px;top:580.3px" width="13" height="13" viewBox="0 0 13 13" ><g fill="none" stroke="#e8682c" stroke-width="1.6" stroke-linecap="round" stroke-linejoin="round"><path d="M4.2 1.6 Q2.6 1.8 2.6 3.4 V5 Q2.6 6.3 1.2 6.5 Q2.6 6.7 2.6 8 V9.6 Q2.6 11.2 4.2 11.4"/><path d="M8.8 1.6 Q10.4 1.8 10.4 3.4 V5 Q10.4 6.3 11.8 6.5 Q10.4 6.7 10.4 8 V9.6 Q10.4 11.2 8.8 11.4"/></g><circle cx="6.5" cy="4.6" r="1" fill="#e8682c"/><path d="M6.6 7.6 L6.2 9.8" stroke="#e8682c" stroke-width="1.5" stroke-linecap="round"/></svg>
<div class="a" style="left:24.4px;top:579.7px;font-size:11.75px;line-height:15px;color:#1f1f1f;white-space:nowrap;">ping?appName=24.1.0</div>
<div class="a" style="left:211.7px;top:579.7px;font-size:11.8px;line-height:15px;color:#1f1f1f;white-space:nowrap;">200</div>
<div class="a" style="left:273.0px;top:579.7px;font-size:11.8px;line-height:15px;color:#1f1f1f;white-space:nowrap;">xhr</div>
<div class="a" style="left:334.7px;top:580.0px;width:97px;overflow:hidden;font-size:11.8px;line-height:14px;color:#1f1f1f;white-space:nowrap;text-decoration:underline">polyfills.54a6329f5</div>
<div class="a" style="left:391.0px;top:580.0px;width:98px;text-align:right;font-size:11.8px;line-height:14px;color:#1f1f1f;white-space:nowrap">73 B</div>
<div class="a" style="left:498.0px;top:580.0px;width:54px;text-align:right;font-size:11.8px;line-height:14px;color:#1f1f1f;white-space:nowrap">36 ms</div>
<div class="a" style="left:1.0px;top:596.0px;width:545px;height:21px;background:#fff"></div>
<svg class="a" style="left:6.5px;top:601.3px" width="13" height="13" viewBox="0 0 13 13" ><g fill="none" stroke="#e8682c" stroke-width="1.6" stroke-linecap="round" stroke-linejoin="round"><path d="M4.2 1.6 Q2.6 1.8 2.6 3.4 V5 Q2.6 6.3 1.2 6.5 Q2.6 6.7 2.6 8 V9.6 Q2.6 11.2 4.2 11.4"/><path d="M8.8 1.6 Q10.4 1.8 10.4 3.4 V5 Q10.4 6.3 11.8 6.5 Q10.4 6.7 10.4 8 V9.6 Q10.4 11.2 8.8 11.4"/></g><circle cx="6.5" cy="4.6" r="1" fill="#e8682c"/><path d="M6.6 7.6 L6.2 9.8" stroke="#e8682c" stroke-width="1.5" stroke-linecap="round"/></svg>
<div class="a" style="left:24.4px;top:600.7px;font-size:11.75px;line-height:15px;color:#1f1f1f;white-space:nowrap;">ping?appName=24.1.0</div>
<div class="a" style="left:211.7px;top:600.7px;font-size:11.8px;line-height:15px;color:#1f1f1f;white-space:nowrap;">200</div>
<div class="a" style="left:273.0px;top:600.7px;font-size:11.8px;line-height:15px;color:#1f1f1f;white-space:nowrap;">xhr</div>
<div class="a" style="left:334.7px;top:601.0px;width:97px;overflow:hidden;font-size:11.8px;line-height:14px;color:#1f1f1f;white-space:nowrap;text-decoration:underline">polyfills.54a6329f5</div>
<div class="a" style="left:391.0px;top:601.0px;width:98px;text-align:right;font-size:11.8px;line-height:14px;color:#1f1f1f;white-space:nowrap">74 B</div>
<div class="a" style="left:498.0px;top:601.0px;width:54px;text-align:right;font-size:11.8px;line-height:14px;color:#1f1f1f;white-space:nowrap">38 ms</div>
<div class="a" style="left:1.0px;top:617.0px;width:545px;height:21px;background:#f5f8fd"></div>
<svg class="a" style="left:6.5px;top:622.3px" width="13" height="13" viewBox="0 0 13 13" ><g fill="none" stroke="#e8682c" stroke-width="1.6" stroke-linecap="round" stroke-linejoin="round"><path d="M4.2 1.6 Q2.6 1.8 2.6 3.4 V5 Q2.6 6.3 1.2 6.5 Q2.6 6.7 2.6 8 V9.6 Q2.6 11.2 4.2 11.4"/><path d="M8.8 1.6 Q10.4 1.8 10.4 3.4 V5 Q10.4 6.3 11.8 6.5 Q10.4 6.7 10.4 8 V9.6 Q10.4 11.2 8.8 11.4"/></g><circle cx="6.5" cy="4.6" r="1" fill="#e8682c"/><path d="M6.6 7.6 L6.2 9.8" stroke="#e8682c" stroke-width="1.5" stroke-linecap="round"/></svg>
<div class="a" style="left:24.4px;top:621.7px;font-size:11.75px;line-height:15px;color:#1f1f1f;white-space:nowrap;">ping?appName=24.1.0</div>
<div class="a" style="left:211.7px;top:621.7px;font-size:11.8px;line-height:15px;color:#1f1f1f;white-space:nowrap;">200</div>
<div class="a" style="left:273.0px;top:621.7px;font-size:11.8px;line-height:15px;color:#1f1f1f;white-space:nowrap;">xhr</div>
<div class="a" style="left:334.7px;top:622.0px;width:97px;overflow:hidden;font-size:11.8px;line-height:14px;color:#1f1f1f;white-space:nowrap;text-decoration:underline">polyfills.54a6329f5</div>
<div class="a" style="left:391.0px;top:622.0px;width:98px;text-align:right;font-size:11.8px;line-height:14px;color:#1f1f1f;white-space:nowrap">73 B</div>
<div class="a" style="left:498.0px;top:622.0px;width:54px;text-align:right;font-size:11.8px;line-height:14px;color:#1f1f1f;white-space:nowrap">34 ms</div>
<div class="a" style="left:1.0px;top:638.0px;width:545px;height:21px;background:#fff"></div>
<svg class="a" style="left:6.5px;top:643.3px" width="13" height="13" viewBox="0 0 13 13" ><g fill="none" stroke="#e8682c" stroke-width="1.6" stroke-linecap="round" stroke-linejoin="round"><path d="M4.2 1.6 Q2.6 1.8 2.6 3.4 V5 Q2.6 6.3 1.2 6.5 Q2.6 6.7 2.6 8 V9.6 Q2.6 11.2 4.2 11.4"/><path d="M8.8 1.6 Q10.4 1.8 10.4 3.4 V5 Q10.4 6.3 11.8 6.5 Q10.4 6.7 10.4 8 V9.6 Q10.4 11.2 8.8 11.4"/></g><circle cx="6.5" cy="4.6" r="1" fill="#e8682c"/><path d="M6.6 7.6 L6.2 9.8" stroke="#e8682c" stroke-width="1.5" stroke-linecap="round"/></svg>
<div class="a" style="left:24.4px;top:642.7px;font-size:11.75px;line-height:15px;color:#1f1f1f;white-space:nowrap;">envelope/?sentry_key=81ae2dd...</div>
<div class="a" style="left:211.7px;top:642.7px;font-size:11.8px;line-height:15px;color:#1f1f1f;white-space:nowrap;">200</div>
<div class="a" style="left:273.0px;top:642.7px;font-size:11.8px;line-height:15px;color:#1f1f1f;white-space:nowrap;">fetch</div>
<div class="a" style="left:334.7px;top:643.0px;width:97px;overflow:hidden;font-size:11.8px;line-height:14px;color:#1f1f1f;white-space:nowrap;text-decoration:underline">polyfills.54a6329f5</div>
<div class="a" style="left:391.0px;top:643.0px;width:98px;text-align:right;font-size:11.8px;line-height:14px;color:#1f1f1f;white-space:nowrap">59 B</div>
<div class="a" style="left:498.0px;top:643.0px;width:54px;text-align:right;font-size:11.8px;line-height:14px;color:#1f1f1f;white-space:nowrap">164 ms</div>
<div class="a" style="left:1.0px;top:659.0px;width:545px;height:21px;background:#f5f8fd"></div>
<svg class="a" style="left:6.5px;top:664.3px" width="13" height="13" viewBox="0 0 13 13" ><g fill="none" stroke="#e8682c" stroke-width="1.6" stroke-linecap="round" stroke-linejoin="round"><path d="M4.2 1.6 Q2.6 1.8 2.6 3.4 V5 Q2.6 6.3 1.2 6.5 Q2.6 6.7 2.6 8 V9.6 Q2.6 11.2 4.2 11.4"/><path d="M8.8 1.6 Q10.4 1.8 10.4 3.4 V5 Q10.4 6.3 11.8 6.5 Q10.4 6.7 10.4 8 V9.6 Q10.4 11.2 8.8 11.4"/></g><circle cx="6.5" cy="4.6" r="1" fill="#e8682c"/><path d="M6.6 7.6 L6.2 9.8" stroke="#e8682c" stroke-width="1.5" stroke-linecap="round"/></svg>
<div class="a" style="left:24.4px;top:663.7px;font-size:11.75px;line-height:15px;color:#1f1f1f;white-space:nowrap;">ping?appName=24.1.0</div>
<div class="a" style="left:211.7px;top:663.7px;font-size:11.8px;line-height:15px;color:#1f1f1f;white-space:nowrap;">200</div>
<div class="a" style="left:273.0px;top:663.7px;font-size:11.8px;line-height:15px;color:#1f1f1f;white-space:nowrap;">xhr</div>
<div class="a" style="left:334.7px;top:664.0px;width:97px;overflow:hidden;font-size:11.8px;line-height:14px;color:#1f1f1f;white-space:nowrap;text-decoration:underline">polyfills.54a6329f5</div>
<div class="a" style="left:391.0px;top:664.0px;width:98px;text-align:right;font-size:11.8px;line-height:14px;color:#1f1f1f;white-space:nowrap">124 B</div>
<div class="a" style="left:498.0px;top:664.0px;width:54px;text-align:right;font-size:11.8px;line-height:14px;color:#1f1f1f;white-space:nowrap">36 ms</div>
<div class="a" style="left:1.0px;top:680.0px;width:545px;height:21px;background:#fff"></div>
<svg class="a" style="left:6.5px;top:685.3px" width="13" height="13" viewBox="0 0 13 13" ><g fill="none" stroke="#e8682c" stroke-width="1.6" stroke-linecap="round" stroke-linejoin="round"><path d="M4.2 1.6 Q2.6 1.8 2.6 3.4 V5 Q2.6 6.3 1.2 6.5 Q2.6 6.7 2.6 8 V9.6 Q2.6 11.2 4.2 11.4"/><path d="M8.8 1.6 Q10.4 1.8 10.4 3.4 V5 Q10.4 6.3 11.8 6.5 Q10.4 6.7 10.4 8 V9.6 Q10.4 11.2 8.8 11.4"/></g><circle cx="6.5" cy="4.6" r="1" fill="#e8682c"/><path d="M6.6 7.6 L6.2 9.8" stroke="#e8682c" stroke-width="1.5" stroke-linecap="round"/></svg>
<div class="a" style="left:24.4px;top:684.7px;font-size:11.75px;line-height:15px;color:#1f1f1f;white-space:nowrap;">envelope/?sentry_key=81ae2dd...</div>
<div class="a" style="left:211.7px;top:684.7px;font-size:11.8px;line-height:15px;color:#1f1f1f;white-space:nowrap;">200</div>
<div class="a" style="left:273.0px;top:684.7px;font-size:11.8px;line-height:15px;color:#1f1f1f;white-space:nowrap;">fetch</div>
<div class="a" style="left:334.7px;top:685.0px;width:97px;overflow:hidden;font-size:11.8px;line-height:14px;color:#1f1f1f;white-space:nowrap;text-decoration:underline">polyfills.54a6329f5</div>
<div class="a" style="left:391.0px;top:685.0px;width:98px;text-align:right;font-size:11.8px;line-height:14px;color:#1f1f1f;white-space:nowrap">59 B</div>
<div class="a" style="left:498.0px;top:685.0px;width:54px;text-align:right;font-size:11.8px;line-height:14px;color:#1f1f1f;white-space:nowrap">35 ms</div>
<div class="a" style="left:206.0px;top:212.0px;width:1px;height:507px;background:#d0dcf2"></div>
<div class="a" style="left:268.0px;top:212.0px;width:1px;height:507px;background:#d0dcf2"></div>
<div class="a" style="left:329.0px;top:212.0px;width:1px;height:507px;background:#d0dcf2"></div>
<div class="a" style="left:432.0px;top:212.0px;width:1px;height:507px;background:#d0dcf2"></div>
<div class="a" style="left:493.0px;top:212.0px;width:1px;height:507px;background:#d0dcf2"></div>
<div class="a" style="left:1.0px;top:718.0px;width:545px;height:1px;background:#d0dcf2"></div>
<div class="a" style="left:11.0px;top:725.1px;font-size:11.6px;line-height:15px;color:#474747;white-space:nowrap;">22 requests</div>
<div class="a" style="left:81.0px;top:725.0px;width:1px;height:16px;background:#d0dcf2"></div>
<div class="a" style="left:91.0px;top:725.1px;font-size:11.6px;line-height:15px;color:#474747;white-space:nowrap;">2.9 kB transferred</div>
<div class="a" style="left:193.0px;top:725.0px;width:1px;height:16px;background:#d0dcf2"></div>
<div class="a" style="left:203.0px;top:725.1px;font-size:11.6px;line-height:15px;color:#474747;white-space:nowrap;">522 B resources</div>
<div class="a" style="left:1.0px;top:745.0px;width:545px;height:28px;background:#edf2fa;border-top:1px solid #d0dcf2;border-bottom:1px solid #d0dcf2"></div>
<svg class="a" style="left:14.0px;top:752.0px" width="6" height="15" viewBox="0 0 6 15" ><g fill="#474747"><circle cx="3" cy="2.5" r="1.3"/><circle cx="3" cy="7.5" r="1.3"/><circle cx="3" cy="12.5" r="1.3"/></g></svg>
<div class="a" style="left:38.6px;top:752.3px;font-size:12.2px;line-height:15px;color:#0b5ce8;white-space:nowrap;">Console</div>
<div class="a" style="left:29.0px;top:770.0px;width:62px;height:2px;background:#0b5ce8"></div>
<div class="a" style="left:100.8px;top:752.4px;font-size:11.8px;line-height:15px;color:#1f1f1f;white-space:nowrap;">What's new</div>
<svg class="a" style="left:533.0px;top:753.0px" width="12" height="12" viewBox="0 0 12 12" ><path d="M1.2 1.2 L10.8 10.8 M10.8 1.2 L1.2 10.8" stroke="#474747" stroke-width="1.3"/></svg>
<svg class="a" style="left:10.0px;top:779.0px" width="14" height="14" viewBox="0 0 14 14" ><rect x="0.7" y="0.7" width="12.6" height="12.6" fill="none" stroke="#474747" stroke-width="1.3"/><path d="M4.5 0.7 V13.3" stroke="#474747" stroke-width="1.3"/><path d="M7 4 L10.5 7 L7 10 Z" fill="#474747"/></svg>
<svg class="a" style="left:37.5px;top:779.0px" width="14" height="14" viewBox="0 0 14 14" ><circle cx="7" cy="7" r="6.2" fill="none" stroke="#474747" stroke-width="1.2"/><path d="M2.7 11.3 L11.3 2.7" stroke="#474747" stroke-width="1.2"/></svg>
<div class="a" style="left:63.0px;top:778.0px;width:1px;height:16px;background:#d0dcf2"></div>
<div class="a" style="left:76.0px;top:779.4px;font-size:11.8px;line-height:15px;color:#1f1f1f;white-space:nowrap;">top</div>
<svg class="a" style="left:98.0px;top:783.0px" width="10" height="7" viewBox="0 0 10 7" ><path d="M0.5 0.5 H9.5 L5 6.5 Z" fill="#474747"/></svg>
<div class="a" style="left:118.0px;top:778.0px;width:1px;height:16px;background:#d0dcf2"></div>
<svg class="a" style="left:127.0px;top:780.0px" width="20" height="12" viewBox="0 0 20 12" ><path d="M1 6 Q10 -2.5 19 6 Q10 14.5 1 6 Z" fill="none" stroke="#474747" stroke-width="1.4"/><circle cx="10" cy="6" r="2.7" fill="none" stroke="#474747" stroke-width="1.5"/></svg>
<div class="a" style="left:155.0px;top:778.0px;width:1px;height:16px;background:#d0dcf2"></div>
<div class="a" style="left:163.0px;top:776.5px;width:154px;height:20px;background:#edf2fa;border-radius:10px"></div>
<svg class="a" style="left:172.5px;top:781.0px" width="12" height="12" viewBox="0 0 12 12" ><path d="M0.8 1 H11.2 L7 6 V11 H5 V6 Z" fill="none" stroke="#474747" stroke-width="1.2" stroke-linejoin="round"/></svg>
<div class="a" style="left:191.4px;top:779.4px;font-size:11.8px;line-height:15px;color:#474747;white-space:nowrap;">Filter</div>
<div class="a" style="left:329.0px;top:779.4px;font-size:11.7px;line-height:15px;color:#1f1f1f;white-space:nowrap;">Default levels</div>
<svg class="a" style="left:404.0px;top:783.0px" width="10" height="7" viewBox="0 0 10 7" ><path d="M0.5 0.5 H9.5 L5 6.5 Z" fill="#474747"/></svg>
<div class="a" style="left:424.0px;top:778.0px;width:1px;height:16px;background:#d0dcf2"></div>
<div class="a" style="left:436.6px;top:780.1px;font-size:11.2px;line-height:14px;color:#1f1f1f;white-space:nowrap;">2 Issues:</div>
<svg class="a" style="left:487.0px;top:780.0px" width="11" height="11" viewBox="0 0 11 11" ><path d="M0.5 0.5 H10.5 V7.5 H3 L0.5 10 Z" fill="#e8710a"/><path d="M5.5 2 V4.8" stroke="#fff" stroke-width="1.3"/><circle cx="5.5" cy="6.2" r="0.7" fill="#fff"/></svg>
<div class="a" style="left:502.0px;top:779.4px;font-size:11.8px;line-height:15px;color:#1f1f1f;white-space:nowrap;">2</div>
<div class="a" style="left:518.0px;top:778.0px;width:1px;height:16px;background:#d0dcf2"></div>
<svg class="a" style="left:528.5px;top:778.0px" width="16" height="16" viewBox="0 0 16 16" ><path d="M8 1.3 L9.3 1.3 L9.7 3 L10.9 3.5 L12.4 2.6 L13.4 3.6 L12.5 5.1 L13 6.3 L14.7 6.7 L14.7 8 L14.7 9.3 L13 9.7 L12.5 10.9 L13.4 12.4 L12.4 13.4 L10.9 12.5 L9.7 13 L9.3 14.7 L6.7 14.7 L6.3 13 L5.1 12.5 L3.6 13.4 L2.6 12.4 L3.5 10.9 L3 9.7 L1.3 9.3 L1.3 6.7 L3 6.3 L3.5 5.1 L2.6 3.6 L3.6 2.6 L5.1 3.5 L6.3 3 L6.7 1.3 Z" fill="none" stroke="#474747" stroke-width="1.3" stroke-linejoin="round"/><circle cx="8" cy="8" r="2.2" fill="#474747"/></svg>
<div class="a" style="left:1.0px;top:799.0px;width:545px;height:1px;background:#d0dcf2"></div>
<div class="a" style="left:5.3px;top:804.0px;width:528.5px;height:160px;background:#fce8e6;border-radius:5px"></div>
<svg class="a" style="left:13.0px;top:807.0px" width="12" height="12" viewBox="0 0 12 12" ><circle cx="6" cy="6" r="5.8" fill="#dc362e"/><path d="M3.8 3.8 L8.2 8.2 M8.2 3.8 L3.8 8.2" stroke="#fff" stroke-width="1.3"/></svg>
<svg class="a" style="left:33.5px;top:809.0px" width="7" height="9" viewBox="0 0 7 9" ><path d="M0.5 0.5 L6.5 4.5 L0.5 8.5 Z" fill="#1f1f1f"/></svg>
<div class="a" style="left:43.2px;top:806.0px;font-family:'Liberation Mono',monospace;font-size:10.95px;line-height:14.4px;white-space:pre;color:#1f1f1f">Error: Multiple Sentry Session Replay</div>
<div class="a" style="left:327.5px;top:806.0px;font-family:'Liberation Mono',monospace;font-size:10.95px;line-height:14.4px;white-space:pre;color:#1f1f1f"><span style="color:#1a48c9;text-decoration:underline">main.7ef9010e8837d44b.js:12</span></div>
<div class="a" style="left:29.3px;top:820.4px;font-family:'Liberation Mono',monospace;font-size:10.95px;line-height:14.4px;white-space:pre;color:#1f1f1f">instances are not supported
    at new d (<span style="color:#1a48c9;text-decoration:underline">main.7ef9010e8837d44b.js:12:229809</span>)
    at customConfig.customConfig.dsn.ye.integrations (
<span style="color:#1a48c9;text-decoration:underline">main.7ef9010e8837d44b.js:1:704710</span>)
    at ce (<span style="color:#1a48c9;text-decoration:underline">main.7ef9010e8837d44b.js:12:27729</span>)
    at wo (<span style="color:#1a48c9;text-decoration:underline">main.7ef9010e8837d44b.js:12:61540</span>)
    at Object.Uo (<span style="color:#1a48c9;text-decoration:underline">main.7ef9010e8837d44b.js:12:62239</span>)
    at <span style="color:#1a48c9;text-decoration:underline">main.7ef9010e8837d44b.js:1:705057</span>
    at _invoke (<span style="color:#1a48c9;text-decoration:underline">polyfills.54a6329f54ec0e56.js:18:18823</span>)</div>
<div class="a" style="left:538.0px;top:800.0px;width:8px;height:143px;background:#f1f1f1"></div>
<svg class="a" style="left:539.0px;top:806.0px" width="7" height="5" viewBox="0 0 7 5" ><path d="M0 5 L3.5 0.5 L7 5 Z" fill="#a3a3a3"/></svg>
<svg class="a" style="left:539.0px;top:933.0px" width="7" height="5" viewBox="0 0 7 5" ><path d="M0 0 L3.5 4.5 L7 0 Z" fill="#505050"/></svg>
<div class="a" style="left:540.0px;top:817.0px;width:6px;height:28px;background:#c1c1c1"></div>
</div>
<div id="edge" class="a"></div>
</body></html>
